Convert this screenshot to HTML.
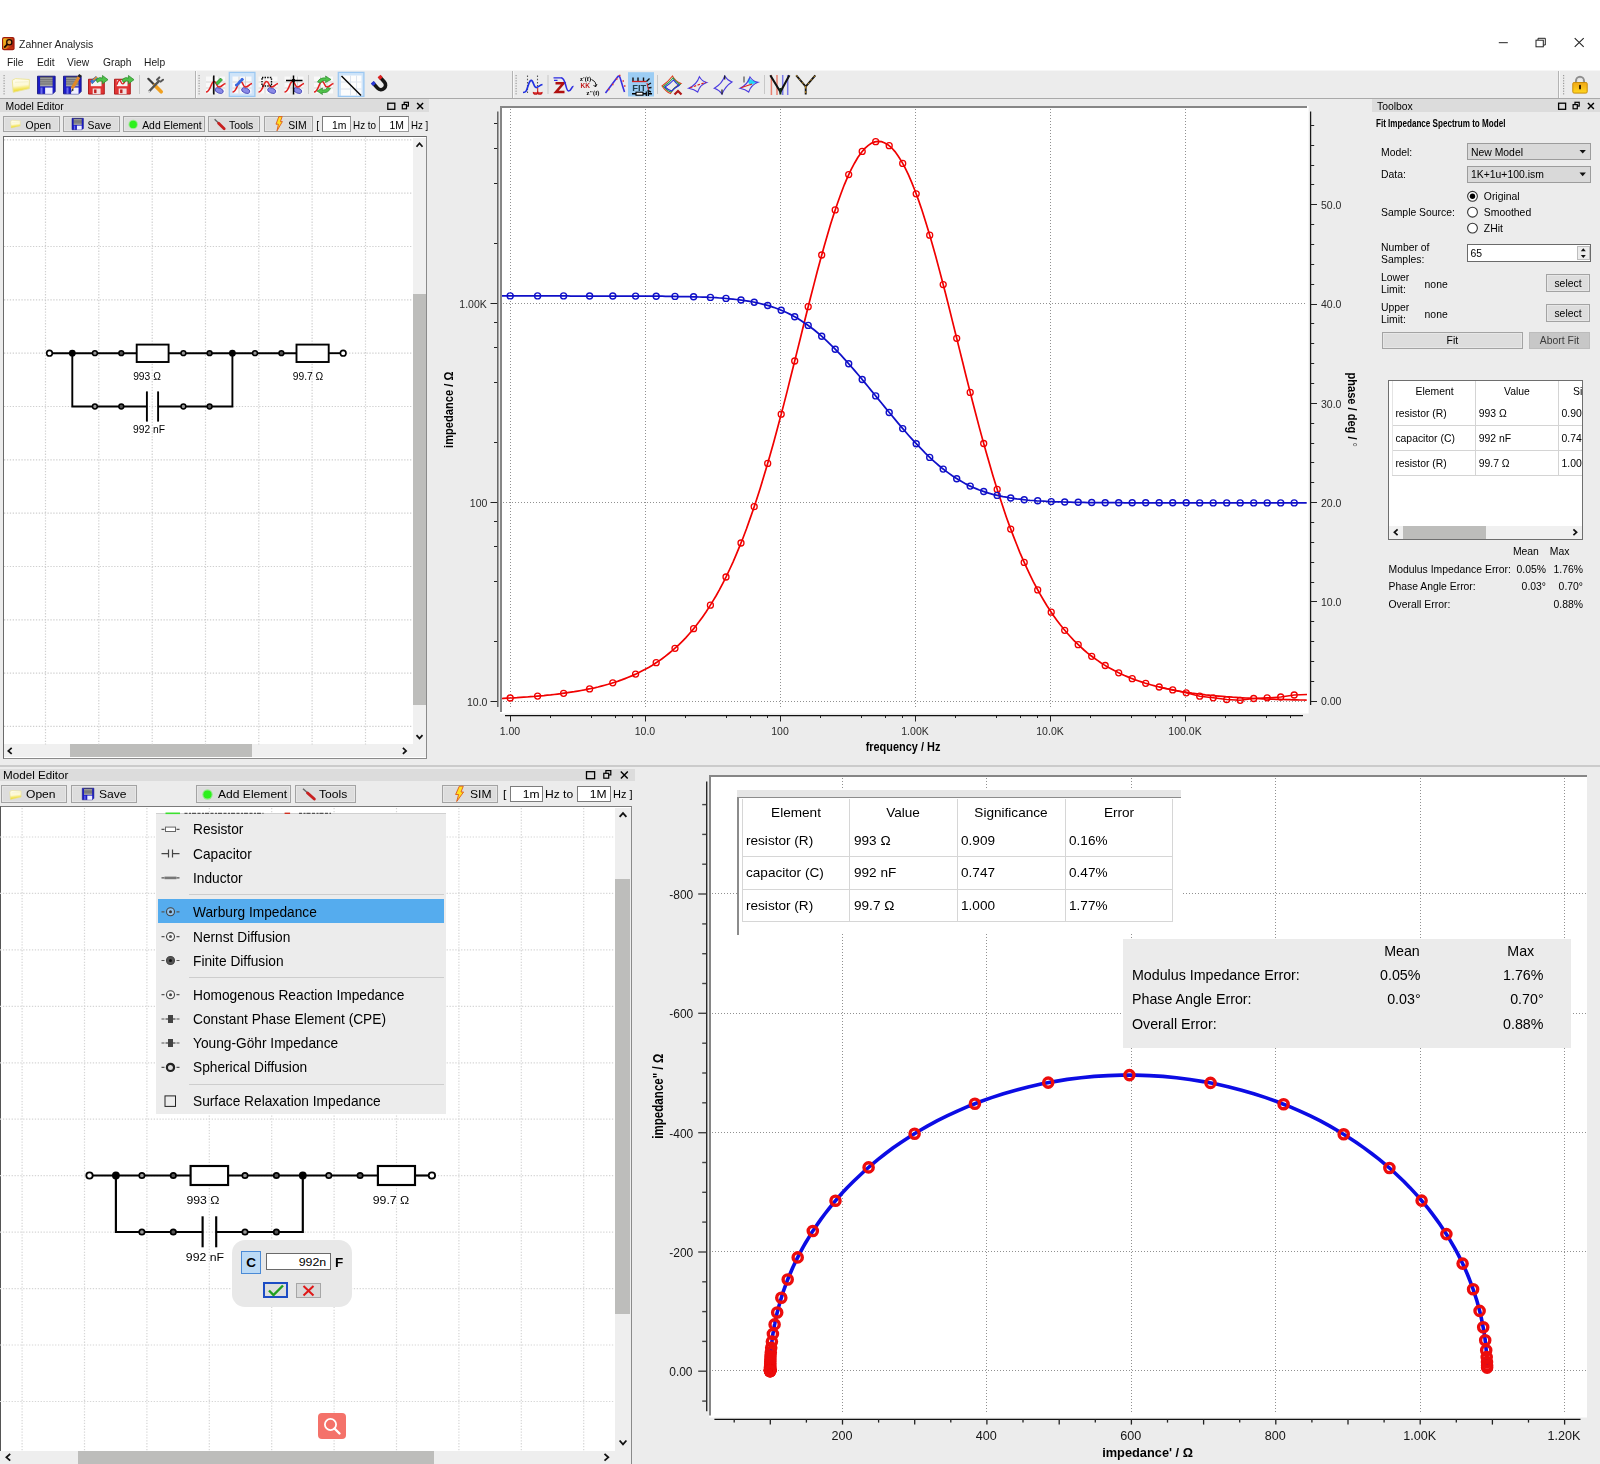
<!DOCTYPE html><html><head><meta charset="utf-8"><title>Zahner Analysis</title>
<style>html,body{margin:0;padding:0}body{width:1600px;height:1464px;position:relative;overflow:hidden;background:#fff;font-family:'Liberation Sans',sans-serif;font-size:11px;color:#000;opacity:.999}</style></head><body>
<div style="position:absolute;left:0px;top:70px;width:1600px;height:696px;box-sizing:border-box;background:#ececec;"></div>
<div style="position:absolute;left:0px;top:98px;width:1600px;height:1px;box-sizing:border-box;background:#a9a9a9;"></div>
<div style="position:absolute;left:0px;top:70px;width:1600px;height:1px;box-sizing:border-box;background:#f6f6f6;"></div>
<div style="position:absolute;top:39.00px;font-size:11px;line-height:1;white-space:nowrap;color:#262626;left:19.00px;transform:scaleX(0.95);transform-origin:0 0;">Zahner Analysis</div>
<div style="position:absolute;top:57.00px;font-size:10.8px;line-height:1;white-space:nowrap;color:#1a1a1a;left:6.60px;transform:scaleX(0.95);transform-origin:0 0;">File</div>
<div style="position:absolute;top:57.00px;font-size:10.8px;line-height:1;white-space:nowrap;color:#1a1a1a;left:36.50px;transform:scaleX(0.95);transform-origin:0 0;">Edit</div>
<div style="position:absolute;top:57.00px;font-size:10.8px;line-height:1;white-space:nowrap;color:#1a1a1a;left:67.30px;transform:scaleX(0.95);transform-origin:0 0;">View</div>
<div style="position:absolute;top:57.00px;font-size:10.8px;line-height:1;white-space:nowrap;color:#1a1a1a;left:102.60px;transform:scaleX(0.95);transform-origin:0 0;">Graph</div>
<div style="position:absolute;top:57.00px;font-size:10.8px;line-height:1;white-space:nowrap;color:#1a1a1a;left:144.40px;transform:scaleX(0.95);transform-origin:0 0;">Help</div>
<div style="position:absolute;left:0px;top:99px;width:428.5px;height:13px;box-sizing:border-box;background:#dcdcdc;"></div>
<div style="position:absolute;top:102.00px;font-size:10.4px;line-height:1;white-space:nowrap;color:#000;left:5.50px;">Model Editor</div>
<div style="position:absolute;left:1372px;top:99px;width:228px;height:13px;box-sizing:border-box;background:#dcdcdc;"></div>
<div style="position:absolute;top:102.00px;font-size:10.4px;line-height:1;white-space:nowrap;color:#000;left:1377.00px;">Toolbox</div>
<div style="position:absolute;left:194.5px;top:71px;width:1px;height:27px;box-sizing:border-box;background:#b4b4b4;"></div>
<div style="position:absolute;left:195.5px;top:71px;width:1px;height:27px;box-sizing:border-box;background:#f8f8f8;"></div>
<div style="position:absolute;left:511.5px;top:71px;width:1px;height:27px;box-sizing:border-box;background:#b4b4b4;"></div>
<div style="position:absolute;left:512.5px;top:71px;width:1px;height:27px;box-sizing:border-box;background:#f8f8f8;"></div>
<div style="position:absolute;left:1557.8px;top:71px;width:1px;height:27px;box-sizing:border-box;background:#b4b4b4;"></div>
<div style="position:absolute;left:1558.8px;top:71px;width:1px;height:27px;box-sizing:border-box;background:#f8f8f8;"></div>
<div style="position:absolute;left:0px;top:765px;width:1600px;height:2px;box-sizing:border-box;background:#cbcbcb;"></div>
<div style="position:absolute;left:0px;top:767px;width:1600px;height:697px;box-sizing:border-box;background:#ececec;"></div>
<div style="position:absolute;left:0px;top:768.5px;width:634.8px;height:12.2px;box-sizing:border-box;background:#dcdcdc;"></div>
<div style="position:absolute;top:770.00px;font-size:11px;line-height:1;white-space:nowrap;color:#000;left:3.30px;transform:scaleX(1.06);transform-origin:0 0;">Model Editor</div>
<div style="position:absolute;left:3px;top:116.2px;width:56.7px;height:15.700000000000003px;box-sizing:border-box;background:#dddddd;border:1px solid #a3a3a3;box-shadow:inset 0 0 0 1px #e6e6e6;"></div>
<div style="position:absolute;left:63.2px;top:116.2px;width:56.39999999999999px;height:15.700000000000003px;box-sizing:border-box;background:#dddddd;border:1px solid #a3a3a3;box-shadow:inset 0 0 0 1px #e6e6e6;"></div>
<div style="position:absolute;left:123px;top:116.2px;width:82px;height:15.700000000000003px;box-sizing:border-box;background:#dddddd;border:1px solid #a3a3a3;box-shadow:inset 0 0 0 1px #e6e6e6;"></div>
<div style="position:absolute;left:208.2px;top:116.2px;width:52.30000000000001px;height:15.700000000000003px;box-sizing:border-box;background:#dddddd;border:1px solid #a3a3a3;box-shadow:inset 0 0 0 1px #e6e6e6;"></div>
<div style="position:absolute;left:264px;top:116.2px;width:48.69999999999999px;height:15.700000000000003px;box-sizing:border-box;background:#dddddd;border:1px solid #a3a3a3;box-shadow:inset 0 0 0 1px #e6e6e6;"></div>
<div style="position:absolute;top:121.00px;font-size:10.4px;line-height:1;white-space:nowrap;color:#000;left:25.60px;">Open</div>
<div style="position:absolute;top:121.00px;font-size:10.4px;line-height:1;white-space:nowrap;color:#000;left:87.50px;">Save</div>
<div style="position:absolute;top:121.00px;font-size:10.4px;line-height:1;white-space:nowrap;color:#000;left:142.20px;">Add Element</div>
<div style="position:absolute;top:121.00px;font-size:10.4px;line-height:1;white-space:nowrap;color:#000;left:229.00px;">Tools</div>
<div style="position:absolute;top:121.00px;font-size:10.4px;line-height:1;white-space:nowrap;color:#000;left:288.20px;">SIM</div>
<div style="position:absolute;top:121.00px;font-size:10.4px;line-height:1;white-space:nowrap;color:#000;left:316.30px;">[</div>
<div style="position:absolute;left:321.8px;top:116.4px;width:29.2px;height:15.2px;box-sizing:border-box;background:#fff;border:1px solid #9a9a9a;border-top:1.5px solid #7c7c7c;border-left:1.5px solid #7c7c7c;"></div>
<div style="position:absolute;top:121.00px;font-size:10.4px;line-height:1;white-space:nowrap;color:#000;right:1253.60px;">1m</div>
<div style="position:absolute;top:121.00px;font-size:10.4px;line-height:1;white-space:nowrap;color:#000;left:352.90px;transform:scaleX(0.95);transform-origin:0 0;">Hz to</div>
<div style="position:absolute;left:379px;top:116.4px;width:29.8px;height:15.2px;box-sizing:border-box;background:#fff;border:1px solid #9a9a9a;border-top:1.5px solid #7c7c7c;border-left:1.5px solid #7c7c7c;"></div>
<div style="position:absolute;top:121.00px;font-size:10.4px;line-height:1;white-space:nowrap;color:#000;right:1196.00px;">1M</div>
<div style="position:absolute;top:121.00px;font-size:10.4px;line-height:1;white-space:nowrap;color:#000;left:410.80px;transform:scaleX(0.93);transform-origin:0 0;">Hz ]</div>
<div style="position:absolute;left:2.5px;top:136px;width:424.5px;height:622.5px;box-sizing:border-box;background:#fff;border:1px solid #8a8a8a;border-top:1.5px solid #6a6a6a;border-left:1.5px solid #6a6a6a;"></div>
<div style="position:absolute;left:412.5px;top:137.5px;width:13.4px;height:606px;box-sizing:border-box;background:#f0f0f0;"></div>
<div style="position:absolute;left:412.5px;top:294px;width:13.4px;height:410.5px;box-sizing:border-box;background:#bdbdbb;"></div>
<div style="position:absolute;left:4px;top:744.4px;width:408.5px;height:13px;box-sizing:border-box;background:#f0f0f0;"></div>
<div style="position:absolute;left:70.1px;top:744.4px;width:181.5px;height:13px;box-sizing:border-box;background:#bdbdbb;"></div>
<div style="position:absolute;left:412.5px;top:744.4px;width:13.4px;height:13px;box-sizing:border-box;background:#f0f0f0;"></div>
<div style="position:absolute;left:1.2px;top:785.4px;width:65.6px;height:17.200000000000045px;box-sizing:border-box;background:#dddddd;border:1px solid #a3a3a3;box-shadow:inset 0 0 0 1px #e6e6e6;"></div>
<div style="position:absolute;left:71.4px;top:785.4px;width:65.6px;height:17.200000000000045px;box-sizing:border-box;background:#dddddd;border:1px solid #a3a3a3;box-shadow:inset 0 0 0 1px #e6e6e6;"></div>
<div style="position:absolute;left:196px;top:785.4px;width:94.80000000000001px;height:17.200000000000045px;box-sizing:border-box;background:#dddddd;border:1px solid #a3a3a3;box-shadow:inset 0 0 0 1px #e6e6e6;"></div>
<div style="position:absolute;left:295.4px;top:785.4px;width:60.60000000000002px;height:17.200000000000045px;box-sizing:border-box;background:#dddddd;border:1px solid #a3a3a3;box-shadow:inset 0 0 0 1px #e6e6e6;"></div>
<div style="position:absolute;left:442.2px;top:785.4px;width:55.80000000000001px;height:17.200000000000045px;box-sizing:border-box;background:#dddddd;border:1px solid #a3a3a3;box-shadow:inset 0 0 0 1px #e6e6e6;"></div>
<div style="position:absolute;top:789.00px;font-size:11.2px;line-height:1;white-space:nowrap;color:#000;left:26.40px;transform:scaleX(1.08);transform-origin:0 0;">Open</div>
<div style="position:absolute;top:789.00px;font-size:11.2px;line-height:1;white-space:nowrap;color:#000;left:99.40px;transform:scaleX(1.08);transform-origin:0 0;">Save</div>
<div style="position:absolute;top:789.00px;font-size:11.2px;line-height:1;white-space:nowrap;color:#000;left:217.80px;transform:scaleX(1.08);transform-origin:0 0;">Add Element</div>
<div style="position:absolute;top:789.00px;font-size:11.2px;line-height:1;white-space:nowrap;color:#000;left:319.30px;transform:scaleX(1.08);transform-origin:0 0;">Tools</div>
<div style="position:absolute;top:789.00px;font-size:11.2px;line-height:1;white-space:nowrap;color:#000;left:470.30px;transform:scaleX(1.08);transform-origin:0 0;">SIM</div>
<div style="position:absolute;top:789.00px;font-size:11.2px;line-height:1;white-space:nowrap;color:#000;left:502.50px;transform:scaleX(1.08);transform-origin:0 0;">[</div>
<div style="position:absolute;left:510px;top:786.2px;width:32.5px;height:15.8px;box-sizing:border-box;background:#fff;border:1px solid #7c7c7c;"></div>
<div style="position:absolute;top:789.00px;font-size:11.2px;line-height:1;white-space:nowrap;color:#000;right:1060.50px;transform:scaleX(1.08);transform-origin:100% 0;">1m</div>
<div style="position:absolute;top:789.00px;font-size:11.2px;line-height:1;white-space:nowrap;color:#000;left:545.40px;transform:scaleX(1.08);transform-origin:0 0;">Hz to</div>
<div style="position:absolute;left:576.5px;top:786.2px;width:34px;height:15.8px;box-sizing:border-box;background:#fff;border:1px solid #7c7c7c;"></div>
<div style="position:absolute;top:789.00px;font-size:11.2px;line-height:1;white-space:nowrap;color:#000;right:993.30px;transform:scaleX(1.08);transform-origin:100% 0;">1M</div>
<div style="position:absolute;top:789.00px;font-size:11.2px;line-height:1;white-space:nowrap;color:#000;left:612.80px;transform:scaleX(0.98);transform-origin:0 0;">Hz ]</div>
<div style="position:absolute;left:0px;top:806.3px;width:632px;height:644.4px;box-sizing:border-box;background:#fff;border-top:1.5px solid #7a7a7a;border-right:1px solid #8a8a8a;border-left:1.5px solid #555;"></div>
<div style="position:absolute;left:614.7px;top:808px;width:16.5px;height:642.7px;box-sizing:border-box;background:#eeeeee;"></div>
<div style="position:absolute;left:615.2px;top:878.8px;width:14.9px;height:435px;box-sizing:border-box;background:#bdbdbb;"></div>
<div style="position:absolute;left:0px;top:1450.7px;width:631.2px;height:13.3px;box-sizing:border-box;background:#eeeeee;"></div>
<div style="position:absolute;left:631.2px;top:1449px;width:1px;height:15px;box-sizing:border-box;background:#8a8a8a;"></div>
<div style="position:absolute;left:78.4px;top:1450.7px;width:355.6px;height:13.3px;box-sizing:border-box;background:#bdbdbb;"></div>
<svg width="1600" height="1464" viewBox="0 0 1600 1464" style="position:absolute;left:0;top:0;overflow:visible">
<g stroke="#cfcfcf" stroke-width="1.2" stroke-dasharray="1.3 1.6" fill="none"><line x1="45.5" y1="137.5" x2="45.5" y2="744.4"/><line x1="98.8" y1="137.5" x2="98.8" y2="744.4"/><line x1="152.2" y1="137.5" x2="152.2" y2="744.4"/><line x1="205.5" y1="137.5" x2="205.5" y2="744.4"/><line x1="258.8" y1="137.5" x2="258.8" y2="744.4"/><line x1="312.1" y1="137.5" x2="312.1" y2="744.4"/><line x1="365.5" y1="137.5" x2="365.5" y2="744.4"/><line x1="4" y1="139.8" x2="412.5" y2="139.8"/><line x1="4" y1="193.1" x2="412.5" y2="193.1"/><line x1="4" y1="246.5" x2="412.5" y2="246.5"/><line x1="4" y1="299.8" x2="412.5" y2="299.8"/><line x1="4" y1="353.1" x2="412.5" y2="353.1"/><line x1="4" y1="406.5" x2="412.5" y2="406.5"/><line x1="4" y1="459.8" x2="412.5" y2="459.8"/><line x1="4" y1="513.1" x2="412.5" y2="513.1"/><line x1="4" y1="566.5" x2="412.5" y2="566.5"/><line x1="4" y1="619.8" x2="412.5" y2="619.8"/><line x1="4" y1="673.1" x2="412.5" y2="673.1"/><line x1="4" y1="726.4" x2="412.5" y2="726.4"/></g><g stroke="#000" stroke-width="1.9" fill="none"><line x1="49.5" y1="353.2" x2="136.7" y2="353.2"/><line x1="168.6" y1="353.2" x2="296.5" y2="353.2"/><line x1="328.7" y1="353.2" x2="343.2" y2="353.2"/><rect x="136.7" y="344.6" width="31.900000000000006" height="17.399999999999977" fill="#fff"/><rect x="296.5" y="344.6" width="32.19999999999999" height="17.399999999999977" fill="#fff"/><path d="M72.3 353.2 V406.5 H146.9 M158.1 406.5 H232.4 V353.2"/><line x1="146.9" y1="391.4" x2="146.9" y2="421.6"/><line x1="158.1" y1="391.4" x2="158.1" y2="421.6"/></g><circle cx="72.3" cy="353.2" r="3.4" fill="#000"/><circle cx="232.4" cy="353.2" r="3.4" fill="#000"/><circle cx="49.5" cy="353.2" r="2.8" fill="#fff" stroke="#000" stroke-width="1.61"/><circle cx="343.2" cy="353.2" r="2.8" fill="#fff" stroke="#000" stroke-width="1.61"/><circle cx="94.9" cy="353.2" r="2.4" fill="#999" stroke="#000" stroke-width="1.52"/><circle cx="121.3" cy="353.2" r="2.4" fill="#555" stroke="#000" stroke-width="1.52"/><circle cx="183.4" cy="353.2" r="2.4" fill="#999" stroke="#000" stroke-width="1.52"/><circle cx="209.6" cy="353.2" r="2.4" fill="#555" stroke="#000" stroke-width="1.52"/><circle cx="255" cy="353.2" r="2.4" fill="#999" stroke="#000" stroke-width="1.52"/><circle cx="281.4" cy="353.2" r="2.4" fill="#555" stroke="#000" stroke-width="1.52"/><circle cx="94.9" cy="406.5" r="2.4" fill="#999" stroke="#000" stroke-width="1.52"/><circle cx="121.3" cy="406.5" r="2.4" fill="#555" stroke="#000" stroke-width="1.52"/><circle cx="183.4" cy="406.5" r="2.4" fill="#999" stroke="#000" stroke-width="1.52"/><circle cx="209.6" cy="406.5" r="2.4" fill="#555" stroke="#000" stroke-width="1.52"/><g stroke="#d6d6d6" stroke-width="1.2" stroke-dasharray="1.3 1.6" fill="none"><line x1="22.1" y1="808" x2="22.1" y2="1450.7"/><line x1="84.5" y1="808" x2="84.5" y2="1450.7"/><line x1="146.9" y1="808" x2="146.9" y2="1450.7"/><line x1="209.3" y1="808" x2="209.3" y2="1450.7"/><line x1="271.7" y1="808" x2="271.7" y2="1450.7"/><line x1="334.1" y1="808" x2="334.1" y2="1450.7"/><line x1="396.5" y1="808" x2="396.5" y2="1450.7"/><line x1="458.9" y1="808" x2="458.9" y2="1450.7"/><line x1="521.3" y1="808" x2="521.3" y2="1450.7"/><line x1="583.7" y1="808" x2="583.7" y2="1450.7"/><line x1="0" y1="837.0" x2="614.7" y2="837.0"/><line x1="0" y1="893.4" x2="614.7" y2="893.4"/><line x1="0" y1="949.9" x2="614.7" y2="949.9"/><line x1="0" y1="1006.3" x2="614.7" y2="1006.3"/><line x1="0" y1="1062.8" x2="614.7" y2="1062.8"/><line x1="0" y1="1119.2" x2="614.7" y2="1119.2"/><line x1="0" y1="1175.7" x2="614.7" y2="1175.7"/><line x1="0" y1="1232.1" x2="614.7" y2="1232.1"/><line x1="0" y1="1288.6" x2="614.7" y2="1288.6"/><line x1="0" y1="1345.0" x2="614.7" y2="1345.0"/><line x1="0" y1="1401.5" x2="614.7" y2="1401.5"/></g><g stroke="#000" stroke-width="2.15" fill="none"><line x1="89.5" y1="1175.5" x2="190.6" y2="1175.5"/><line x1="228.1" y1="1175.5" x2="377.9" y2="1175.5"/><line x1="415" y1="1175.5" x2="431.9" y2="1175.5"/><rect x="190.6" y="1166" width="37.5" height="19" fill="#fff"/><rect x="377.9" y="1166" width="37.10000000000002" height="19" fill="#fff"/><path d="M115.9 1175.5 V1232 H202.6 M216.2 1232 H302.8 V1175.5"/><line x1="202.6" y1="1216.3" x2="202.6" y2="1247.3"/><line x1="216.2" y1="1216.3" x2="216.2" y2="1247.3"/></g><circle cx="115.9" cy="1175.5" r="3.9" fill="#000"/><circle cx="302.8" cy="1175.5" r="3.9" fill="#000"/><circle cx="89.5" cy="1175.5" r="3.2" fill="#fff" stroke="#000" stroke-width="1.83"/><circle cx="431.9" cy="1175.5" r="3.2" fill="#fff" stroke="#000" stroke-width="1.83"/><circle cx="141.9" cy="1175.5" r="2.7" fill="#999" stroke="#000" stroke-width="1.72"/><circle cx="173.3" cy="1175.5" r="2.7" fill="#555" stroke="#000" stroke-width="1.72"/><circle cx="245" cy="1175.5" r="2.7" fill="#999" stroke="#000" stroke-width="1.72"/><circle cx="276.4" cy="1175.5" r="2.7" fill="#555" stroke="#000" stroke-width="1.72"/><circle cx="328.8" cy="1175.5" r="2.7" fill="#999" stroke="#000" stroke-width="1.72"/><circle cx="360.1" cy="1175.5" r="2.7" fill="#555" stroke="#000" stroke-width="1.72"/><circle cx="141.9" cy="1232" r="2.7" fill="#999" stroke="#000" stroke-width="1.72"/><circle cx="173.3" cy="1232" r="2.7" fill="#555" stroke="#000" stroke-width="1.72"/><circle cx="245" cy="1232" r="2.7" fill="#999" stroke="#000" stroke-width="1.72"/><circle cx="276.4" cy="1232" r="2.7" fill="#555" stroke="#000" stroke-width="1.72"/>
<rect x="500" y="106" width="808.5999999999999" height="607.5" fill="#fff"/><path d="M501 712 V107 H1307.0" stroke="#868686" stroke-width="2" fill="none"/><g stroke="#909090" stroke-width="1" stroke-dasharray="1 2" fill="none"><line x1="510.5" y1="109" x2="510.5" y2="709"/><line x1="645.5" y1="109" x2="645.5" y2="709"/><line x1="780.5" y1="109" x2="780.5" y2="709"/><line x1="915.5" y1="109" x2="915.5" y2="709"/><line x1="1050.5" y1="109" x2="1050.5" y2="709"/><line x1="1185.5" y1="109" x2="1185.5" y2="709"/><line x1="503" y1="303.5" x2="1305.6" y2="303.5"/><line x1="503" y1="502.5" x2="1305.6" y2="502.5"/><line x1="503" y1="701.5" x2="1305.6" y2="701.5"/></g><g stroke="#222" fill="none"><line x1="497.8" y1="111.5" x2="497.8" y2="707" stroke-width="1.4" stroke="#5a5a5a"/><line x1="505" y1="715.6" x2="1303" y2="715.6" stroke-width="1.15" stroke="#111"/><line x1="1310.6" y1="111.5" x2="1310.6" y2="705" stroke-width="1.25" stroke="#1a1a1a"/><line x1="490.5" y1="701.5" x2="497.2" y2="701.5" stroke-width="1"/><line x1="494" y1="641.5" x2="497.2" y2="641.5" stroke-width="1"/><line x1="494" y1="581.5" x2="497.2" y2="581.5" stroke-width="1"/><line x1="494" y1="546.5" x2="497.2" y2="546.5" stroke-width="1"/><line x1="494" y1="521.5" x2="497.2" y2="521.5" stroke-width="1"/><line x1="490.5" y1="502.5" x2="497.2" y2="502.5" stroke-width="1"/><line x1="494" y1="442.5" x2="497.2" y2="442.5" stroke-width="1"/><line x1="494" y1="382.5" x2="497.2" y2="382.5" stroke-width="1"/><line x1="494" y1="347.5" x2="497.2" y2="347.5" stroke-width="1"/><line x1="494" y1="322.5" x2="497.2" y2="322.5" stroke-width="1"/><line x1="490.5" y1="303.5" x2="497.2" y2="303.5" stroke-width="1"/><line x1="494" y1="243.5" x2="497.2" y2="243.5" stroke-width="1"/><line x1="494" y1="183.5" x2="497.2" y2="183.5" stroke-width="1"/><line x1="494" y1="148.5" x2="497.2" y2="148.5" stroke-width="1"/><line x1="494" y1="123.5" x2="497.2" y2="123.5" stroke-width="1"/><line x1="510.5" y1="715.6" x2="510.5" y2="721.5" stroke-width="1"/><line x1="550.5" y1="715.6" x2="550.5" y2="718" stroke-width="1"/><line x1="591.5" y1="715.6" x2="591.5" y2="718" stroke-width="1"/><line x1="615.5" y1="715.6" x2="615.5" y2="718" stroke-width="1"/><line x1="632.5" y1="715.6" x2="632.5" y2="718" stroke-width="1"/><line x1="645.5" y1="715.6" x2="645.5" y2="721.5" stroke-width="1"/><line x1="685.5" y1="715.6" x2="685.5" y2="718" stroke-width="1"/><line x1="726.5" y1="715.6" x2="726.5" y2="718" stroke-width="1"/><line x1="750.5" y1="715.6" x2="750.5" y2="718" stroke-width="1"/><line x1="767.5" y1="715.6" x2="767.5" y2="718" stroke-width="1"/><line x1="780.5" y1="715.6" x2="780.5" y2="721.5" stroke-width="1"/><line x1="820.5" y1="715.6" x2="820.5" y2="718" stroke-width="1"/><line x1="861.5" y1="715.6" x2="861.5" y2="718" stroke-width="1"/><line x1="885.5" y1="715.6" x2="885.5" y2="718" stroke-width="1"/><line x1="902.5" y1="715.6" x2="902.5" y2="718" stroke-width="1"/><line x1="915.5" y1="715.6" x2="915.5" y2="721.5" stroke-width="1"/><line x1="955.5" y1="715.6" x2="955.5" y2="718" stroke-width="1"/><line x1="996.5" y1="715.6" x2="996.5" y2="718" stroke-width="1"/><line x1="1020.5" y1="715.6" x2="1020.5" y2="718" stroke-width="1"/><line x1="1037.5" y1="715.6" x2="1037.5" y2="718" stroke-width="1"/><line x1="1050.5" y1="715.6" x2="1050.5" y2="721.5" stroke-width="1"/><line x1="1090.5" y1="715.6" x2="1090.5" y2="718" stroke-width="1"/><line x1="1131.5" y1="715.6" x2="1131.5" y2="718" stroke-width="1"/><line x1="1155.5" y1="715.6" x2="1155.5" y2="718" stroke-width="1"/><line x1="1172.5" y1="715.6" x2="1172.5" y2="718" stroke-width="1"/><line x1="1185.5" y1="715.6" x2="1185.5" y2="721.5" stroke-width="1"/><line x1="1225.5" y1="715.6" x2="1225.5" y2="718" stroke-width="1"/><line x1="1266.5" y1="715.6" x2="1266.5" y2="718" stroke-width="1"/><line x1="1290.5" y1="715.6" x2="1290.5" y2="718" stroke-width="1"/><line x1="1310.6" y1="701.5" x2="1317" y2="701.5" stroke-width="1"/><line x1="1310.6" y1="681.5" x2="1314.2" y2="681.5" stroke-width="1"/><line x1="1310.6" y1="661.5" x2="1314.2" y2="661.5" stroke-width="1"/><line x1="1310.6" y1="641.5" x2="1314.2" y2="641.5" stroke-width="1"/><line x1="1310.6" y1="621.5" x2="1314.2" y2="621.5" stroke-width="1"/><line x1="1310.6" y1="601.5" x2="1317" y2="601.5" stroke-width="1"/><line x1="1310.6" y1="582.5" x2="1314.2" y2="582.5" stroke-width="1"/><line x1="1310.6" y1="562.5" x2="1314.2" y2="562.5" stroke-width="1"/><line x1="1310.6" y1="542.5" x2="1314.2" y2="542.5" stroke-width="1"/><line x1="1310.6" y1="522.5" x2="1314.2" y2="522.5" stroke-width="1"/><line x1="1310.6" y1="502.5" x2="1317" y2="502.5" stroke-width="1"/><line x1="1310.6" y1="482.5" x2="1314.2" y2="482.5" stroke-width="1"/><line x1="1310.6" y1="462.5" x2="1314.2" y2="462.5" stroke-width="1"/><line x1="1310.6" y1="443.5" x2="1314.2" y2="443.5" stroke-width="1"/><line x1="1310.6" y1="423.5" x2="1314.2" y2="423.5" stroke-width="1"/><line x1="1310.6" y1="403.5" x2="1317" y2="403.5" stroke-width="1"/><line x1="1310.6" y1="383.5" x2="1314.2" y2="383.5" stroke-width="1"/><line x1="1310.6" y1="363.5" x2="1314.2" y2="363.5" stroke-width="1"/><line x1="1310.6" y1="343.5" x2="1314.2" y2="343.5" stroke-width="1"/><line x1="1310.6" y1="323.5" x2="1314.2" y2="323.5" stroke-width="1"/><line x1="1310.6" y1="304.5" x2="1317" y2="304.5" stroke-width="1"/><line x1="1310.6" y1="284.5" x2="1314.2" y2="284.5" stroke-width="1"/><line x1="1310.6" y1="264.5" x2="1314.2" y2="264.5" stroke-width="1"/><line x1="1310.6" y1="244.5" x2="1314.2" y2="244.5" stroke-width="1"/><line x1="1310.6" y1="224.5" x2="1314.2" y2="224.5" stroke-width="1"/><line x1="1310.6" y1="204.5" x2="1317" y2="204.5" stroke-width="1"/><line x1="1310.6" y1="184.5" x2="1314.2" y2="184.5" stroke-width="1"/><line x1="1310.6" y1="165.5" x2="1314.2" y2="165.5" stroke-width="1"/><line x1="1310.6" y1="145.5" x2="1314.2" y2="145.5" stroke-width="1"/><line x1="1310.6" y1="125.5" x2="1314.2" y2="125.5" stroke-width="1"/></g><clipPath id="cb"><rect x="502" y="108" width="805.5999999999999" height="605.5"/></clipPath><g clip-path="url(#cb)" fill="none"><polyline points="496.7,698.7 500.1,698.6 503.4,698.4 506.8,698.2 510.2,698.0 513.6,697.9 516.9,697.7 520.3,697.4 523.7,697.2 527.1,697.0 530.5,696.7 533.8,696.5 537.2,696.2 540.6,695.9 543.9,695.6 547.3,695.2 550.7,694.9 554.1,694.5 557.5,694.1 560.8,693.7 564.2,693.2 567.6,692.7 570.9,692.2 574.3,691.7 577.7,691.1 581.1,690.5 584.5,689.9 587.8,689.2 591.2,688.5 594.6,687.8 598.0,687.0 601.3,686.1 604.7,685.2 608.1,684.3 611.5,683.3 614.8,682.2 618.2,681.1 621.6,679.9 625.0,678.6 628.3,677.3 631.7,675.9 635.1,674.4 638.5,672.8 641.8,671.1 645.2,669.3 648.6,667.4 652.0,665.4 655.3,663.3 658.7,661.1 662.1,658.7 665.5,656.2 668.8,653.5 672.2,650.7 675.6,647.7 679.0,644.6 682.3,641.3 685.7,637.8 689.1,634.0 692.5,630.1 695.8,626.0 699.2,621.6 702.6,616.9 706.0,612.0 709.3,606.9 712.7,601.4 716.1,595.7 719.5,589.7 722.8,583.3 726.2,576.6 729.6,569.5 733.0,562.1 736.3,554.4 739.7,546.2 743.1,537.7 746.5,528.8 749.8,519.4 753.2,509.7 756.6,499.6 760.0,489.0 763.3,478.1 766.7,466.8 770.1,455.1 773.5,443.1 776.8,430.7 780.2,418.0 783.6,405.1 787.0,391.9 790.3,378.5 793.7,365.0 797.1,351.4 800.5,337.8 803.8,324.2 807.2,310.7 810.6,297.3 814.0,284.1 817.3,271.2 820.7,258.7 824.1,246.5 827.5,234.8 830.8,223.6 834.2,212.9 837.6,202.9 841.0,193.5 844.3,184.8 847.7,176.8 851.1,169.6 854.5,163.2 857.8,157.5 861.2,152.7 864.6,148.7 868.0,145.6 871.3,143.3 874.7,141.9 878.1,141.4 881.5,141.7 884.8,142.9 888.2,144.9 891.6,147.8 895.0,151.6 898.3,156.2 901.7,161.6 905.1,167.9 908.5,174.9 911.8,182.7 915.2,191.2 918.6,200.4 922.0,210.2 925.3,220.7 928.7,231.8 932.1,243.4 935.5,255.4 938.8,267.9 942.2,280.7 945.6,293.8 949.0,307.2 952.3,320.6 955.7,334.2 959.1,347.9 962.5,361.5 965.8,375.0 969.2,388.4 972.6,401.7 976.0,414.7 979.3,427.4 982.7,439.9 986.1,452.0 989.5,463.8 992.8,475.2 996.2,486.2 999.6,496.8 1003.0,507.1 1006.3,516.9 1009.7,526.4 1013.1,535.4 1016.5,544.0 1019.8,552.3 1023.2,560.1 1026.6,567.6 1030.0,574.8 1033.3,581.6 1036.7,588.0 1040.1,594.2 1043.5,600.0 1046.8,605.5 1050.2,610.7 1053.6,615.7 1057.0,620.4 1060.3,624.8 1063.7,629.0 1067.1,633.0 1070.5,636.8 1073.8,640.4 1077.2,643.7 1080.6,646.9 1084.0,650.0 1087.3,652.8 1090.7,655.5 1094.1,658.0 1097.5,660.4 1100.8,662.7 1104.2,664.9 1107.6,666.9 1111.0,668.8 1114.3,670.6 1117.7,672.3 1121.1,673.9 1124.5,675.5 1127.8,676.9 1131.2,678.3 1134.6,679.6 1138.0,680.8 1141.3,681.9 1144.7,683.0 1148.1,684.0 1151.5,685.0 1154.8,685.9 1158.2,686.7 1161.6,687.6 1165.0,688.3 1168.3,689.0 1171.7,689.7 1175.1,690.4 1178.5,691.0 1181.8,691.6 1185.2,692.1 1188.6,692.6 1192.0,693.1 1195.3,693.5 1198.7,694.0 1202.1,694.4 1205.5,694.8 1208.8,695.1 1212.2,695.5 1215.6,695.8 1219.0,696.1 1222.3,696.4 1225.7,696.7 1229.1,696.9 1232.5,697.2 1235.8,697.4 1239.2,697.6 1242.6,697.8 1246.0,698.0 1249.3,698.2 1252.7,698.4 1256.1,698.5 1259.5,698.7 1262.8,698.8 1266.2,699.0 1269.6,699.1 1273.0,699.2 1276.3,699.3 1279.7,699.4 1283.1,699.5 1286.5,699.6 1289.8,699.7 1293.2,699.8 1296.6,699.9 1300.0,700.0 1303.3,700.0 1306.7,700.1" stroke="#f00000" stroke-width="1.7"/><polyline points="1159.2,687.0 1172.7,689.9 1186.2,692.8 1199.7,696.2 1213.2,697.8 1226.7,699.6 1240.2,700.3 1253.7,698.5 1267.2,697.8 1280.7,697.0 1294.2,695.0 1307,694.4" stroke="#f00000" stroke-width="1.5"/><polyline points="496.7,295.9 500.1,295.9 503.4,295.9 506.8,295.9 510.2,295.9 513.6,295.9 516.9,295.9 520.3,295.9 523.7,295.9 527.1,295.9 530.5,295.9 533.8,295.9 537.2,295.9 540.6,295.9 543.9,295.9 547.3,295.9 550.7,295.9 554.1,295.9 557.5,295.9 560.8,295.9 564.2,295.9 567.6,295.9 570.9,296.0 574.3,296.0 577.7,296.0 581.1,296.0 584.5,296.0 587.8,296.0 591.2,296.0 594.6,296.0 598.0,296.0 601.3,296.0 604.7,296.0 608.1,296.0 611.5,296.0 614.8,296.0 618.2,296.0 621.6,296.0 625.0,296.0 628.3,296.0 631.7,296.0 635.1,296.1 638.5,296.1 641.8,296.1 645.2,296.1 648.6,296.1 652.0,296.1 655.3,296.2 658.7,296.2 662.1,296.2 665.5,296.3 668.8,296.3 672.2,296.3 675.6,296.4 679.0,296.5 682.3,296.5 685.7,296.6 689.1,296.7 692.5,296.8 695.8,296.9 699.2,297.0 702.6,297.1 706.0,297.2 709.3,297.4 712.7,297.5 716.1,297.7 719.5,298.0 722.8,298.2 726.2,298.5 729.6,298.8 733.0,299.1 736.3,299.5 739.7,299.9 743.1,300.3 746.5,300.8 749.8,301.4 753.2,302.0 756.6,302.7 760.0,303.5 763.3,304.3 766.7,305.2 770.1,306.2 773.5,307.3 776.8,308.5 780.2,309.8 783.6,311.2 787.0,312.8 790.3,314.4 793.7,316.2 797.1,318.1 800.5,320.2 803.8,322.4 807.2,324.7 810.6,327.2 814.0,329.8 817.3,332.5 820.7,335.4 824.1,338.4 827.5,341.6 830.8,344.8 834.2,348.2 837.6,351.6 841.0,355.2 844.3,358.9 847.7,362.6 851.1,366.5 854.5,370.4 857.8,374.3 861.2,378.3 864.6,382.4 868.0,386.5 871.3,390.6 874.7,394.7 878.1,398.9 881.5,403.0 884.8,407.1 888.2,411.3 891.6,415.3 895.0,419.4 898.3,423.4 901.7,427.4 905.1,431.3 908.5,435.2 911.8,438.9 915.2,442.6 918.6,446.2 922.0,449.7 925.3,453.1 928.7,456.4 932.1,459.6 935.5,462.6 938.8,465.5 942.2,468.3 945.6,470.9 949.0,473.4 952.3,475.8 955.7,478.0 959.1,480.1 962.5,482.1 965.8,483.9 969.2,485.6 972.6,487.2 976.0,488.6 979.3,490.0 982.7,491.2 986.1,492.3 989.5,493.3 992.8,494.3 996.2,495.1 999.6,495.9 1003.0,496.6 1006.3,497.2 1009.7,497.8 1013.1,498.3 1016.5,498.8 1019.8,499.2 1023.2,499.6 1026.6,500.0 1030.0,500.3 1033.3,500.5 1036.7,500.8 1040.1,501.0 1043.5,501.2 1046.8,501.4 1050.2,501.5 1053.6,501.7 1057.0,501.8 1060.3,501.9 1063.7,502.0 1067.1,502.1 1070.5,502.2 1073.8,502.3 1077.2,502.3 1080.6,502.4 1084.0,502.4 1087.3,502.5 1090.7,502.5 1094.1,502.6 1097.5,502.6 1100.8,502.6 1104.2,502.6 1107.6,502.7 1111.0,502.7 1114.3,502.7 1117.7,502.7 1121.1,502.7 1124.5,502.8 1127.8,502.8 1131.2,502.8 1134.6,502.8 1138.0,502.8 1141.3,502.8 1144.7,502.8 1148.1,502.8 1151.5,502.8 1154.8,502.8 1158.2,502.8 1161.6,502.8 1165.0,502.8 1168.3,502.8 1171.7,502.8 1175.1,502.8 1178.5,502.8 1181.8,502.8 1185.2,502.8 1188.6,502.8 1192.0,502.8 1195.3,502.9 1198.7,502.9 1202.1,502.9 1205.5,502.9 1208.8,502.9 1212.2,502.9 1215.6,502.9 1219.0,502.9 1222.3,502.9 1225.7,502.9 1229.1,502.9 1232.5,502.9 1235.8,502.9 1239.2,502.9 1242.6,502.9 1246.0,502.9 1249.3,502.9 1252.7,502.9 1256.1,502.9 1259.5,502.9 1262.8,502.9 1266.2,502.9 1269.6,502.9 1273.0,502.9 1276.3,502.9 1279.7,502.9 1283.1,502.9 1286.5,502.9 1289.8,502.9 1293.2,502.9 1296.6,502.9 1300.0,502.9 1303.3,502.9 1306.7,502.9" stroke="#1010c8" stroke-width="1.75"/><circle cx="510.2" cy="698.0" r="3.0" stroke="#f00000" stroke-width="1.3"/><circle cx="537.6" cy="696.1" r="3.0" stroke="#f00000" stroke-width="1.3"/><circle cx="563.6" cy="693.3" r="3.0" stroke="#f00000" stroke-width="1.3"/><circle cx="589.6" cy="688.9" r="3.0" stroke="#f00000" stroke-width="1.3"/><circle cx="612.8" cy="682.8" r="3.0" stroke="#f00000" stroke-width="1.3"/><circle cx="635.6" cy="674.1" r="3.0" stroke="#f00000" stroke-width="1.3"/><circle cx="656.2" cy="662.7" r="3.0" stroke="#f00000" stroke-width="1.3"/><circle cx="675.0" cy="648.3" r="3.0" stroke="#f00000" stroke-width="1.3"/><circle cx="693.6" cy="628.7" r="3.0" stroke="#f00000" stroke-width="1.3"/><circle cx="710.4" cy="605.2" r="3.0" stroke="#f00000" stroke-width="1.3"/><circle cx="726.0" cy="577.0" r="3.0" stroke="#f00000" stroke-width="1.3"/><circle cx="741.0" cy="543.0" r="3.0" stroke="#f00000" stroke-width="1.3"/><circle cx="754.2" cy="506.7" r="3.0" stroke="#f00000" stroke-width="1.3"/><circle cx="767.7" cy="463.4" r="3.0" stroke="#f00000" stroke-width="1.3"/><circle cx="781.2" cy="414.2" r="3.0" stroke="#f00000" stroke-width="1.3"/><circle cx="794.7" cy="361.0" r="3.0" stroke="#f00000" stroke-width="1.3"/><circle cx="808.2" cy="306.7" r="3.0" stroke="#f00000" stroke-width="1.3"/><circle cx="821.7" cy="255.0" r="3.0" stroke="#f00000" stroke-width="1.3"/><circle cx="835.2" cy="209.9" r="3.0" stroke="#f00000" stroke-width="1.3"/><circle cx="848.7" cy="174.6" r="3.0" stroke="#f00000" stroke-width="1.3"/><circle cx="862.2" cy="151.4" r="3.0" stroke="#f00000" stroke-width="1.3"/><circle cx="875.7" cy="141.7" r="3.0" stroke="#f00000" stroke-width="1.3"/><circle cx="889.2" cy="145.7" r="3.0" stroke="#f00000" stroke-width="1.3"/><circle cx="902.7" cy="163.4" r="3.0" stroke="#f00000" stroke-width="1.3"/><circle cx="916.2" cy="193.8" r="3.0" stroke="#f00000" stroke-width="1.3"/><circle cx="929.7" cy="235.2" r="3.0" stroke="#f00000" stroke-width="1.3"/><circle cx="943.2" cy="284.6" r="3.0" stroke="#f00000" stroke-width="1.3"/><circle cx="956.7" cy="338.3" r="3.0" stroke="#f00000" stroke-width="1.3"/><circle cx="970.2" cy="392.4" r="3.0" stroke="#f00000" stroke-width="1.3"/><circle cx="983.7" cy="443.5" r="3.0" stroke="#f00000" stroke-width="1.3"/><circle cx="997.2" cy="489.4" r="3.0" stroke="#f00000" stroke-width="1.3"/><circle cx="1010.7" cy="529.1" r="3.0" stroke="#f00000" stroke-width="1.3"/><circle cx="1024.2" cy="562.4" r="3.0" stroke="#f00000" stroke-width="1.3"/><circle cx="1037.7" cy="589.9" r="3.0" stroke="#f00000" stroke-width="1.3"/><circle cx="1051.2" cy="612.2" r="3.0" stroke="#f00000" stroke-width="1.3"/><circle cx="1064.7" cy="630.3" r="3.0" stroke="#f00000" stroke-width="1.3"/><circle cx="1078.2" cy="644.7" r="3.0" stroke="#f00000" stroke-width="1.3"/><circle cx="1091.7" cy="656.3" r="3.0" stroke="#f00000" stroke-width="1.3"/><circle cx="1105.2" cy="665.5" r="3.0" stroke="#f00000" stroke-width="1.3"/><circle cx="1118.7" cy="672.8" r="3.0" stroke="#f00000" stroke-width="1.3"/><circle cx="1132.2" cy="678.7" r="3.0" stroke="#f00000" stroke-width="1.3"/><circle cx="1145.7" cy="683.3" r="3.0" stroke="#f00000" stroke-width="1.3"/><circle cx="1159.2" cy="687.0" r="3.0" stroke="#f00000" stroke-width="1.3"/><circle cx="1172.7" cy="689.9" r="3.0" stroke="#f00000" stroke-width="1.3"/><circle cx="1186.2" cy="692.8" r="3.0" stroke="#f00000" stroke-width="1.3"/><circle cx="1199.7" cy="696.2" r="3.0" stroke="#f00000" stroke-width="1.3"/><circle cx="1213.2" cy="697.8" r="3.0" stroke="#f00000" stroke-width="1.3"/><circle cx="1226.7" cy="699.6" r="3.0" stroke="#f00000" stroke-width="1.3"/><circle cx="1240.2" cy="700.3" r="3.0" stroke="#f00000" stroke-width="1.3"/><circle cx="1253.7" cy="698.5" r="3.0" stroke="#f00000" stroke-width="1.3"/><circle cx="1267.2" cy="697.8" r="3.0" stroke="#f00000" stroke-width="1.3"/><circle cx="1280.7" cy="697.0" r="3.0" stroke="#f00000" stroke-width="1.3"/><circle cx="1294.2" cy="695.0" r="3.0" stroke="#f00000" stroke-width="1.3"/><circle cx="510.2" cy="295.9" r="3.0" stroke="#1010c8" stroke-width="1.4"/><circle cx="537.6" cy="295.9" r="3.0" stroke="#1010c8" stroke-width="1.4"/><circle cx="563.6" cy="295.9" r="3.0" stroke="#1010c8" stroke-width="1.4"/><circle cx="589.6" cy="296.0" r="3.0" stroke="#1010c8" stroke-width="1.4"/><circle cx="612.8" cy="296.0" r="3.0" stroke="#1010c8" stroke-width="1.4"/><circle cx="635.6" cy="296.1" r="3.0" stroke="#1010c8" stroke-width="1.4"/><circle cx="656.2" cy="296.2" r="3.0" stroke="#1010c8" stroke-width="1.4"/><circle cx="675.0" cy="296.4" r="3.0" stroke="#1010c8" stroke-width="1.4"/><circle cx="693.6" cy="296.8" r="3.0" stroke="#1010c8" stroke-width="1.4"/><circle cx="710.4" cy="297.4" r="3.0" stroke="#1010c8" stroke-width="1.4"/><circle cx="726.0" cy="298.4" r="3.0" stroke="#1010c8" stroke-width="1.4"/><circle cx="741.0" cy="300.0" r="3.0" stroke="#1010c8" stroke-width="1.4"/><circle cx="754.2" cy="302.2" r="3.0" stroke="#1010c8" stroke-width="1.4"/><circle cx="767.7" cy="305.5" r="3.0" stroke="#1010c8" stroke-width="1.4"/><circle cx="781.2" cy="310.2" r="3.0" stroke="#1010c8" stroke-width="1.4"/><circle cx="794.7" cy="316.8" r="3.0" stroke="#1010c8" stroke-width="1.4"/><circle cx="808.2" cy="325.4" r="3.0" stroke="#1010c8" stroke-width="1.4"/><circle cx="821.7" cy="336.3" r="3.0" stroke="#1010c8" stroke-width="1.4"/><circle cx="835.2" cy="349.2" r="3.0" stroke="#1010c8" stroke-width="1.4"/><circle cx="848.7" cy="363.8" r="3.0" stroke="#1010c8" stroke-width="1.4"/><circle cx="862.2" cy="379.5" r="3.0" stroke="#1010c8" stroke-width="1.4"/><circle cx="875.7" cy="395.9" r="3.0" stroke="#1010c8" stroke-width="1.4"/><circle cx="889.2" cy="412.5" r="3.0" stroke="#1010c8" stroke-width="1.4"/><circle cx="902.7" cy="428.6" r="3.0" stroke="#1010c8" stroke-width="1.4"/><circle cx="916.2" cy="443.7" r="3.0" stroke="#1010c8" stroke-width="1.4"/><circle cx="929.7" cy="457.4" r="3.0" stroke="#1010c8" stroke-width="1.4"/><circle cx="943.2" cy="469.1" r="3.0" stroke="#1010c8" stroke-width="1.4"/><circle cx="956.7" cy="478.7" r="3.0" stroke="#1010c8" stroke-width="1.4"/><circle cx="970.2" cy="486.1" r="3.0" stroke="#1010c8" stroke-width="1.4"/><circle cx="983.7" cy="491.5" r="3.0" stroke="#1010c8" stroke-width="1.4"/><circle cx="997.2" cy="495.4" r="3.0" stroke="#1010c8" stroke-width="1.4"/><circle cx="1010.7" cy="498.0" r="3.0" stroke="#1010c8" stroke-width="1.4"/><circle cx="1024.2" cy="499.7" r="3.0" stroke="#1010c8" stroke-width="1.4"/><circle cx="1037.7" cy="500.8" r="3.0" stroke="#1010c8" stroke-width="1.4"/><circle cx="1051.2" cy="501.6" r="3.0" stroke="#1010c8" stroke-width="1.4"/><circle cx="1064.7" cy="502.0" r="3.0" stroke="#1010c8" stroke-width="1.4"/><circle cx="1078.2" cy="502.3" r="3.0" stroke="#1010c8" stroke-width="1.4"/><circle cx="1091.7" cy="502.5" r="3.0" stroke="#1010c8" stroke-width="1.4"/><circle cx="1105.2" cy="502.7" r="3.0" stroke="#1010c8" stroke-width="1.4"/><circle cx="1118.7" cy="502.7" r="3.0" stroke="#1010c8" stroke-width="1.4"/><circle cx="1132.2" cy="502.8" r="3.0" stroke="#1010c8" stroke-width="1.4"/><circle cx="1145.7" cy="502.8" r="3.0" stroke="#1010c8" stroke-width="1.4"/><circle cx="1159.2" cy="502.8" r="3.0" stroke="#1010c8" stroke-width="1.4"/><circle cx="1172.7" cy="502.8" r="3.0" stroke="#1010c8" stroke-width="1.4"/><circle cx="1186.2" cy="502.8" r="3.0" stroke="#1010c8" stroke-width="1.4"/><circle cx="1199.7" cy="502.9" r="3.0" stroke="#1010c8" stroke-width="1.4"/><circle cx="1213.2" cy="502.9" r="3.0" stroke="#1010c8" stroke-width="1.4"/><circle cx="1226.7" cy="502.9" r="3.0" stroke="#1010c8" stroke-width="1.4"/><circle cx="1240.2" cy="502.9" r="3.0" stroke="#1010c8" stroke-width="1.4"/><circle cx="1253.7" cy="502.9" r="3.0" stroke="#1010c8" stroke-width="1.4"/><circle cx="1267.2" cy="502.9" r="3.0" stroke="#1010c8" stroke-width="1.4"/><circle cx="1280.7" cy="502.9" r="3.0" stroke="#1010c8" stroke-width="1.4"/><circle cx="1294.2" cy="502.9" r="3.0" stroke="#1010c8" stroke-width="1.4"/></g>
<rect x="709" y="775" width="878" height="642.5" fill="#fff"/><path d="M710 1415.6 V776 H1587" stroke="#868686" stroke-width="2" fill="none"/><g stroke="#909090" stroke-width="1" stroke-dasharray="1 2" fill="none"><line x1="842.5" y1="778" x2="842.5" y2="1414"/><line x1="986.5" y1="778" x2="986.5" y2="1414"/><line x1="1131.5" y1="778" x2="1131.5" y2="1414"/><line x1="1275.5" y1="778" x2="1275.5" y2="1414"/><line x1="1420.5" y1="778" x2="1420.5" y2="1414"/><line x1="1564.5" y1="778" x2="1564.5" y2="1414"/><line x1="712" y1="1370.5" x2="1587" y2="1370.5"/><line x1="712" y1="1251.5" x2="1587" y2="1251.5"/><line x1="712" y1="1132.5" x2="1587" y2="1132.5"/><line x1="712" y1="1013.5" x2="1587" y2="1013.5"/><line x1="712" y1="893.5" x2="1587" y2="893.5"/></g><g fill="none"><line x1="706.7" y1="781.5" x2="706.7" y2="1411.3" stroke-width="1.4" stroke="#2a2a2a"/><line x1="714.4" y1="1419.4" x2="1580.5" y2="1419.4" stroke-width="1.4" stroke="#111"/><line x1="702.2" y1="1401.1" x2="706.2" y2="1401.1" stroke-width="1.4" stroke="#444"/><line x1="698.2" y1="1371.2" x2="706.2" y2="1371.2" stroke-width="1.4" stroke="#444"/><line x1="702.2" y1="1341.4" x2="706.2" y2="1341.4" stroke-width="1.4" stroke="#444"/><line x1="702.2" y1="1311.6" x2="706.2" y2="1311.6" stroke-width="1.4" stroke="#444"/><line x1="702.2" y1="1281.8" x2="706.2" y2="1281.8" stroke-width="1.4" stroke="#444"/><line x1="698.2" y1="1252.0" x2="706.2" y2="1252.0" stroke-width="1.4" stroke="#444"/><line x1="702.2" y1="1222.1" x2="706.2" y2="1222.1" stroke-width="1.4" stroke="#444"/><line x1="702.2" y1="1192.3" x2="706.2" y2="1192.3" stroke-width="1.4" stroke="#444"/><line x1="702.2" y1="1162.5" x2="706.2" y2="1162.5" stroke-width="1.4" stroke="#444"/><line x1="698.2" y1="1132.7" x2="706.2" y2="1132.7" stroke-width="1.4" stroke="#444"/><line x1="702.2" y1="1102.8" x2="706.2" y2="1102.8" stroke-width="1.4" stroke="#444"/><line x1="702.2" y1="1073.0" x2="706.2" y2="1073.0" stroke-width="1.4" stroke="#444"/><line x1="702.2" y1="1043.2" x2="706.2" y2="1043.2" stroke-width="1.4" stroke="#444"/><line x1="698.2" y1="1013.3" x2="706.2" y2="1013.3" stroke-width="1.4" stroke="#444"/><line x1="702.2" y1="983.5" x2="706.2" y2="983.5" stroke-width="1.4" stroke="#444"/><line x1="702.2" y1="953.7" x2="706.2" y2="953.7" stroke-width="1.4" stroke="#444"/><line x1="702.2" y1="923.9" x2="706.2" y2="923.9" stroke-width="1.4" stroke="#444"/><line x1="698.2" y1="894.0" x2="706.2" y2="894.0" stroke-width="1.4" stroke="#444"/><line x1="702.2" y1="864.2" x2="706.2" y2="864.2" stroke-width="1.4" stroke="#444"/><line x1="702.2" y1="834.4" x2="706.2" y2="834.4" stroke-width="1.4" stroke="#444"/><line x1="702.2" y1="804.6" x2="706.2" y2="804.6" stroke-width="1.4" stroke="#444"/><line x1="734.2" y1="1419.4" x2="734.2" y2="1422.6" stroke-width="1.3" stroke="#222"/><line x1="770.3" y1="1419.4" x2="770.3" y2="1424.6" stroke-width="1.3" stroke="#222"/><line x1="806.4" y1="1419.4" x2="806.4" y2="1422.6" stroke-width="1.3" stroke="#222"/><line x1="842.5" y1="1419.4" x2="842.5" y2="1424.6" stroke-width="1.3" stroke="#222"/><line x1="878.6" y1="1419.4" x2="878.6" y2="1422.6" stroke-width="1.3" stroke="#222"/><line x1="914.7" y1="1419.4" x2="914.7" y2="1424.6" stroke-width="1.3" stroke="#222"/><line x1="950.8" y1="1419.4" x2="950.8" y2="1422.6" stroke-width="1.3" stroke="#222"/><line x1="986.9" y1="1419.4" x2="986.9" y2="1424.6" stroke-width="1.3" stroke="#222"/><line x1="1023.0" y1="1419.4" x2="1023.0" y2="1422.6" stroke-width="1.3" stroke="#222"/><line x1="1059.2" y1="1419.4" x2="1059.2" y2="1424.6" stroke-width="1.3" stroke="#222"/><line x1="1095.3" y1="1419.4" x2="1095.3" y2="1422.6" stroke-width="1.3" stroke="#222"/><line x1="1131.4" y1="1419.4" x2="1131.4" y2="1424.6" stroke-width="1.3" stroke="#222"/><line x1="1167.5" y1="1419.4" x2="1167.5" y2="1422.6" stroke-width="1.3" stroke="#222"/><line x1="1203.6" y1="1419.4" x2="1203.6" y2="1424.6" stroke-width="1.3" stroke="#222"/><line x1="1239.7" y1="1419.4" x2="1239.7" y2="1422.6" stroke-width="1.3" stroke="#222"/><line x1="1275.8" y1="1419.4" x2="1275.8" y2="1424.6" stroke-width="1.3" stroke="#222"/><line x1="1311.9" y1="1419.4" x2="1311.9" y2="1422.6" stroke-width="1.3" stroke="#222"/><line x1="1348.0" y1="1419.4" x2="1348.0" y2="1424.6" stroke-width="1.3" stroke="#222"/><line x1="1384.1" y1="1419.4" x2="1384.1" y2="1422.6" stroke-width="1.3" stroke="#222"/><line x1="1420.2" y1="1419.4" x2="1420.2" y2="1424.6" stroke-width="1.3" stroke="#222"/><line x1="1456.3" y1="1419.4" x2="1456.3" y2="1422.6" stroke-width="1.3" stroke="#222"/><line x1="1492.4" y1="1419.4" x2="1492.4" y2="1424.6" stroke-width="1.3" stroke="#222"/><line x1="1528.5" y1="1419.4" x2="1528.5" y2="1422.6" stroke-width="1.3" stroke="#222"/><line x1="1564.6" y1="1419.4" x2="1564.6" y2="1424.6" stroke-width="1.3" stroke="#222"/></g>
</svg>
<div style="position:absolute;top:299.00px;font-size:11px;line-height:1;white-space:nowrap;color:#2a2a2a;right:1113.00px;transform:scaleX(0.955);transform-origin:100% 0;">1.00K</div>
<div style="position:absolute;top:498.00px;font-size:11px;line-height:1;white-space:nowrap;color:#2a2a2a;right:1113.00px;transform:scaleX(0.955);transform-origin:100% 0;">100</div>
<div style="position:absolute;top:697.00px;font-size:11px;line-height:1;white-space:nowrap;color:#2a2a2a;right:1113.00px;transform:scaleX(0.955);transform-origin:100% 0;">10.0</div>
<div style="position:absolute;top:726.00px;font-size:11px;line-height:1;white-space:nowrap;color:#2a2a2a;left:209.70px;width:600px;text-align:center;transform:scaleX(0.955);transform-origin:50% 0;">1.00</div>
<div style="position:absolute;top:726.00px;font-size:11px;line-height:1;white-space:nowrap;color:#2a2a2a;left:344.70px;width:600px;text-align:center;transform:scaleX(0.955);transform-origin:50% 0;">10.0</div>
<div style="position:absolute;top:726.00px;font-size:11px;line-height:1;white-space:nowrap;color:#2a2a2a;left:479.70px;width:600px;text-align:center;transform:scaleX(0.955);transform-origin:50% 0;">100</div>
<div style="position:absolute;top:726.00px;font-size:11px;line-height:1;white-space:nowrap;color:#2a2a2a;left:614.70px;width:600px;text-align:center;transform:scaleX(0.955);transform-origin:50% 0;">1.00K</div>
<div style="position:absolute;top:726.00px;font-size:11px;line-height:1;white-space:nowrap;color:#2a2a2a;left:749.70px;width:600px;text-align:center;transform:scaleX(0.955);transform-origin:50% 0;">10.0K</div>
<div style="position:absolute;top:726.00px;font-size:11px;line-height:1;white-space:nowrap;color:#2a2a2a;left:884.70px;width:600px;text-align:center;transform:scaleX(0.955);transform-origin:50% 0;">100.0K</div>
<div style="position:absolute;top:696.00px;font-size:11px;line-height:1;white-space:nowrap;color:#2a2a2a;left:1320.80px;transform:scaleX(0.955);transform-origin:0 0;">0.00</div>
<div style="position:absolute;top:597.00px;font-size:11px;line-height:1;white-space:nowrap;color:#2a2a2a;left:1320.80px;transform:scaleX(0.955);transform-origin:0 0;">10.0</div>
<div style="position:absolute;top:498.00px;font-size:11px;line-height:1;white-space:nowrap;color:#2a2a2a;left:1320.80px;transform:scaleX(0.955);transform-origin:0 0;">20.0</div>
<div style="position:absolute;top:399.00px;font-size:11px;line-height:1;white-space:nowrap;color:#2a2a2a;left:1320.80px;transform:scaleX(0.955);transform-origin:0 0;">30.0</div>
<div style="position:absolute;top:299.00px;font-size:11px;line-height:1;white-space:nowrap;color:#2a2a2a;left:1320.80px;transform:scaleX(0.955);transform-origin:0 0;">40.0</div>
<div style="position:absolute;top:200.00px;font-size:11px;line-height:1;white-space:nowrap;color:#2a2a2a;left:1320.80px;transform:scaleX(0.955);transform-origin:0 0;">50.0</div>
<div style="position:absolute;top:740.00px;font-size:13.5px;line-height:1;white-space:nowrap;color:#000;font-weight:bold;left:603.00px;width:600px;text-align:center;transform:scaleX(0.81);transform-origin:50% 0;">frequency / Hz</div>
<div style="position:absolute;left:299.1px;top:403.2px;width:300px;text-align:center;font-size:13.5px;line-height:1;font-weight:bold;white-space:nowrap;transform:rotate(-90deg) scaleX(0.825)">impedance / Ω</div>
<div style="position:absolute;left:1202.2px;top:403.2px;width:300px;text-align:center;font-size:13.5px;line-height:1;font-weight:bold;white-space:nowrap;transform:rotate(90deg) scaleX(0.82)">phase / deg / <span style="font-weight:normal;color:#444">°</span></div>
<div style="position:absolute;top:1366.00px;font-size:12.6px;line-height:1;white-space:nowrap;color:#161616;right:907.20px;transform:scaleX(0.95);transform-origin:100% 0;">0.00</div>
<div style="position:absolute;top:1247.00px;font-size:12.6px;line-height:1;white-space:nowrap;color:#161616;right:907.20px;transform:scaleX(0.95);transform-origin:100% 0;">-200</div>
<div style="position:absolute;top:1128.00px;font-size:12.6px;line-height:1;white-space:nowrap;color:#161616;right:907.20px;transform:scaleX(0.95);transform-origin:100% 0;">-400</div>
<div style="position:absolute;top:1008.00px;font-size:12.6px;line-height:1;white-space:nowrap;color:#161616;right:907.20px;transform:scaleX(0.95);transform-origin:100% 0;">-600</div>
<div style="position:absolute;top:889.00px;font-size:12.6px;line-height:1;white-space:nowrap;color:#161616;right:907.20px;transform:scaleX(0.95);transform-origin:100% 0;">-800</div>
<div style="position:absolute;top:1430.00px;font-size:12.6px;line-height:1;white-space:nowrap;color:#161616;left:541.92px;width:600px;text-align:center;">200</div>
<div style="position:absolute;top:1430.00px;font-size:12.6px;line-height:1;white-space:nowrap;color:#161616;left:686.34px;width:600px;text-align:center;">400</div>
<div style="position:absolute;top:1430.00px;font-size:12.6px;line-height:1;white-space:nowrap;color:#161616;left:830.76px;width:600px;text-align:center;">600</div>
<div style="position:absolute;top:1430.00px;font-size:12.6px;line-height:1;white-space:nowrap;color:#161616;left:975.18px;width:600px;text-align:center;">800</div>
<div style="position:absolute;top:1430.00px;font-size:12.6px;line-height:1;white-space:nowrap;color:#161616;left:1119.60px;width:600px;text-align:center;">1.00K</div>
<div style="position:absolute;top:1430.00px;font-size:12.6px;line-height:1;white-space:nowrap;color:#161616;left:1264.02px;width:600px;text-align:center;">1.20K</div>
<div style="position:absolute;top:1447.00px;font-size:12.8px;line-height:1;white-space:nowrap;color:#000;font-weight:bold;left:847.60px;width:600px;text-align:center;">impedance' / Ω</div>
<div style="position:absolute;left:508.4px;top:1089.2px;width:300px;text-align:center;font-size:14.5px;line-height:1;font-weight:bold;white-space:nowrap;transform:rotate(-90deg) scaleX(0.8)">impedance" / Ω</div>
<div style="position:absolute;left:1375.6px;top:118.0px;font-size:11px;line-height:1;font-weight:bold;white-space:nowrap;transform:scaleX(0.735);transform-origin:0 0">Fit Impedance Spectrum to Model</div>
<div style="position:absolute;top:148.00px;font-size:10.4px;line-height:1;white-space:nowrap;color:#000;left:1381.00px;">Model:</div>
<div style="position:absolute;top:170.00px;font-size:10.4px;line-height:1;white-space:nowrap;color:#000;left:1381.00px;">Data:</div>
<div style="position:absolute;left:1467px;top:143.2px;width:124px;height:17.2px;box-sizing:border-box;background:#d9d9d9;border:1px solid #9c9c9c;"></div>
<div style="position:absolute;top:148.00px;font-size:10.4px;line-height:1;white-space:nowrap;color:#000;left:1471.00px;">New Model</div>
<div style="position:absolute;left:1467px;top:165.9px;width:124px;height:17.2px;box-sizing:border-box;background:#d9d9d9;border:1px solid #9c9c9c;"></div>
<div style="position:absolute;top:170.00px;font-size:10.4px;line-height:1;white-space:nowrap;color:#000;left:1471.00px;">1K+1u+100.ism</div>
<div style="position:absolute;top:208.00px;font-size:10.4px;line-height:1;white-space:nowrap;color:#000;left:1381.00px;">Sample Source:</div>
<div style="position:absolute;top:192.00px;font-size:10.4px;line-height:1;white-space:nowrap;color:#000;left:1483.80px;">Original</div>
<div style="position:absolute;top:208.00px;font-size:10.4px;line-height:1;white-space:nowrap;color:#000;left:1483.80px;">Smoothed</div>
<div style="position:absolute;top:224.00px;font-size:10.4px;line-height:1;white-space:nowrap;color:#000;left:1483.80px;">ZHit</div>
<div style="position:absolute;top:243.00px;font-size:10.4px;line-height:1;white-space:nowrap;color:#000;left:1381.00px;">Number of</div>
<div style="position:absolute;top:255.00px;font-size:10.4px;line-height:1;white-space:nowrap;color:#000;left:1381.00px;">Samples:</div>
<div style="position:absolute;left:1467px;top:244.2px;width:124px;height:17.7px;box-sizing:border-box;background:#fff;border:1px solid #6a6a6a;"></div>
<div style="position:absolute;top:249.00px;font-size:10.4px;line-height:1;white-space:nowrap;color:#000;left:1470.50px;">65</div>
<div style="position:absolute;left:1577px;top:246px;width:12.5px;height:14px;box-sizing:border-box;background:#ececec;border:1px solid #bdbdbd;"></div>
<div style="position:absolute;top:273.00px;font-size:10.4px;line-height:1;white-space:nowrap;color:#000;left:1381.00px;">Lower</div>
<div style="position:absolute;top:285.00px;font-size:10.4px;line-height:1;white-space:nowrap;color:#000;left:1381.00px;">Limit:</div>
<div style="position:absolute;top:280.00px;font-size:10.4px;line-height:1;white-space:nowrap;color:#000;left:1424.60px;">none</div>
<div style="position:absolute;top:303.00px;font-size:10.4px;line-height:1;white-space:nowrap;color:#000;left:1381.00px;">Upper</div>
<div style="position:absolute;top:315.00px;font-size:10.4px;line-height:1;white-space:nowrap;color:#000;left:1381.00px;">Limit:</div>
<div style="position:absolute;top:310.00px;font-size:10.4px;line-height:1;white-space:nowrap;color:#000;left:1424.60px;">none</div>
<div style="position:absolute;left:1546px;top:274.2px;width:44px;height:17.80000000000001px;box-sizing:border-box;background:#dddddd;border:1px solid #a3a3a3;box-shadow:inset 0 0 0 1px #e6e6e6;"></div>
<div style="position:absolute;left:1546px;top:304.3px;width:44px;height:17.399999999999977px;box-sizing:border-box;background:#dddddd;border:1px solid #a3a3a3;box-shadow:inset 0 0 0 1px #e6e6e6;"></div>
<div style="position:absolute;top:279.00px;font-size:10.4px;line-height:1;white-space:nowrap;color:#000;left:1268.00px;width:600px;text-align:center;">select</div>
<div style="position:absolute;top:309.00px;font-size:10.4px;line-height:1;white-space:nowrap;color:#000;left:1268.00px;width:600px;text-align:center;">select</div>
<div style="position:absolute;left:1381.8px;top:331.8px;width:141.0px;height:16.80000000000001px;box-sizing:border-box;background:#dddddd;border:1px solid #a3a3a3;box-shadow:inset 0 0 0 1px #e6e6e6;"></div>
<div style="position:absolute;top:336.00px;font-size:10.4px;line-height:1;white-space:nowrap;color:#000;left:1152.40px;width:600px;text-align:center;">Fit</div>
<div style="position:absolute;left:1529px;top:331.8px;width:61px;height:16.8px;box-sizing:border-box;background:#c7c7c7;border:1px solid #bcbcbc;"></div>
<div style="position:absolute;top:336.00px;font-size:10.4px;line-height:1;white-space:nowrap;color:#3c3c3c;left:1259.50px;width:600px;text-align:center;">Abort Fit</div>
<div style="position:absolute;left:1388.2px;top:380.2px;width:195px;height:159.6px;box-sizing:border-box;background:#fff;border:1px solid #6e6e6e;"></div>
<div style="position:absolute;left:1389.2px;top:381.2px;width:193px;height:157.6px;overflow:hidden">
<div style="position:absolute;left:-54.6px;width:200px;text-align:center;top:5.8px;font-size:10.4px;line-height:1;white-space:nowrap;transform:scaleX(1.0)">Element</div>
<div style="position:absolute;left:27.8px;width:200px;text-align:center;top:5.8px;font-size:10.4px;line-height:1;white-space:nowrap;transform:scaleX(1.0)">Value</div>
<div style="position:absolute;left:111.8px;width:200px;text-align:center;top:5.8px;font-size:10.4px;line-height:1;white-space:nowrap;transform:scaleX(1.0)">Significance</div>
<div style="position:absolute;left:6.2px;top:27.8px;font-size:10.4px;line-height:1;white-space:nowrap;transform:scaleX(1.0);transform-origin:0 0">resistor (R)</div>
<div style="position:absolute;left:89.5px;top:27.8px;font-size:10.4px;line-height:1;white-space:nowrap;transform:scaleX(1.0);transform-origin:0 0">993 Ω</div>
<div style="position:absolute;left:172.4px;top:27.8px;font-size:10.4px;line-height:1;white-space:nowrap;transform:scaleX(1.0);transform-origin:0 0">0.909</div>
<div style="position:absolute;left:6.2px;top:52.8px;font-size:10.4px;line-height:1;white-space:nowrap;transform:scaleX(1.0);transform-origin:0 0">capacitor (C)</div>
<div style="position:absolute;left:89.5px;top:52.8px;font-size:10.4px;line-height:1;white-space:nowrap;transform:scaleX(1.0);transform-origin:0 0">992 nF</div>
<div style="position:absolute;left:172.4px;top:52.8px;font-size:10.4px;line-height:1;white-space:nowrap;transform:scaleX(1.0);transform-origin:0 0">0.747</div>
<div style="position:absolute;left:6.2px;top:77.8px;font-size:10.4px;line-height:1;white-space:nowrap;transform:scaleX(1.0);transform-origin:0 0">resistor (R)</div>
<div style="position:absolute;left:89.5px;top:77.8px;font-size:10.4px;line-height:1;white-space:nowrap;transform:scaleX(1.0);transform-origin:0 0">99.7 Ω</div>
<div style="position:absolute;left:172.4px;top:77.8px;font-size:10.4px;line-height:1;white-space:nowrap;transform:scaleX(1.0);transform-origin:0 0">1.000</div>
<div style="position:absolute;left:2.5px;top:44.3px;width:200px;height:1px;background:#d4d4d4"></div>
<div style="position:absolute;left:2.5px;top:69.1px;width:200px;height:1px;background:#d4d4d4"></div>
<div style="position:absolute;left:2.5px;top:94.2px;width:200px;height:1px;background:#d4d4d4"></div>
<div style="position:absolute;left:86.1px;top:0;width:1px;height:94.2px;background:#d4d4d4"></div>
<div style="position:absolute;left:169.3px;top:0;width:1px;height:94.2px;background:#d4d4d4"></div>
<div style="position:absolute;left:2.5px;top:0;width:1px;height:94.2px;background:#e4e4e4"></div>
<div style="position:absolute;left:0;top:144.6px;width:193px;height:13px;background:#f0f0f0"></div>
<div style="position:absolute;left:14.0px;top:144.6px;width:82.7px;height:13px;background:#bdbdbb"></div>
</div>
<div style="position:absolute;top:547.00px;font-size:10.4px;line-height:1;white-space:nowrap;color:#000;right:61.10px;">Mean</div>
<div style="position:absolute;top:547.00px;font-size:10.4px;line-height:1;white-space:nowrap;color:#000;right:30.50px;">Max</div>
<div style="position:absolute;top:565.00px;font-size:10.4px;line-height:1;white-space:nowrap;color:#000;left:1388.50px;">Modulus Impedance Error:</div>
<div style="position:absolute;top:565.00px;font-size:10.4px;line-height:1;white-space:nowrap;color:#000;right:54.00px;">0.05%</div>
<div style="position:absolute;top:565.00px;font-size:10.4px;line-height:1;white-space:nowrap;color:#000;right:17.00px;">1.76%</div>
<div style="position:absolute;top:582.00px;font-size:10.4px;line-height:1;white-space:nowrap;color:#000;left:1388.50px;">Phase Angle Error:</div>
<div style="position:absolute;top:582.00px;font-size:10.4px;line-height:1;white-space:nowrap;color:#000;right:54.00px;">0.03°</div>
<div style="position:absolute;top:582.00px;font-size:10.4px;line-height:1;white-space:nowrap;color:#000;right:17.00px;">0.70°</div>
<div style="position:absolute;top:600.00px;font-size:10.4px;line-height:1;white-space:nowrap;color:#000;left:1388.50px;">Overall Error:</div>
<div style="position:absolute;top:600.00px;font-size:10.4px;line-height:1;white-space:nowrap;color:#000;right:17.00px;">0.88%</div>
<div style="position:absolute;top:371.00px;font-size:10.6px;line-height:1;white-space:nowrap;color:#000;left:-153.30px;width:600px;text-align:center;transform:scaleX(0.97);transform-origin:50% 0;">993 Ω</div>
<div style="position:absolute;top:371.00px;font-size:10.6px;line-height:1;white-space:nowrap;color:#000;left:8.20px;width:600px;text-align:center;transform:scaleX(0.97);transform-origin:50% 0;">99.7 Ω</div>
<div style="position:absolute;top:424.00px;font-size:10.6px;line-height:1;white-space:nowrap;color:#000;left:-151.50px;width:600px;text-align:center;transform:scaleX(0.97);transform-origin:50% 0;">992 nF</div>
<div style="position:absolute;top:1194.00px;font-size:11.6px;line-height:1;white-space:nowrap;color:#000;left:-97.50px;width:600px;text-align:center;transform:scaleX(1.06);transform-origin:50% 0;">993 Ω</div>
<div style="position:absolute;top:1194.00px;font-size:11.6px;line-height:1;white-space:nowrap;color:#000;left:91.20px;width:600px;text-align:center;transform:scaleX(1.06);transform-origin:50% 0;">99.7 Ω</div>
<div style="position:absolute;top:1251.00px;font-size:11.6px;line-height:1;white-space:nowrap;color:#000;left:-95.20px;width:600px;text-align:center;transform:scaleX(1.06);transform-origin:50% 0;">992 nF</div>
<div style="position:absolute;left:737px;top:789.8px;width:444px;height:144.5px;box-sizing:border-box;background:#fff;"></div>
<div style="position:absolute;left:737px;top:789.8px;width:444px;height:7.5px;box-sizing:border-box;background:#e6e6e6;"></div>
<div style="position:absolute;left:737px;top:796.6px;width:444px;height:1.4px;box-sizing:border-box;background:#8c8c8c;"></div>
<div style="position:absolute;left:737px;top:796.6px;width:1.5px;height:138px;box-sizing:border-box;background:#8c8c8c;"></div>
<div style="position:absolute;left:741.5px;top:799px;width:1px;height:122.5px;box-sizing:border-box;background:#d6d6d6;"></div>
<div style="position:absolute;left:849px;top:799px;width:1px;height:122.5px;box-sizing:border-box;background:#d6d6d6;"></div>
<div style="position:absolute;left:957px;top:799px;width:1px;height:122.5px;box-sizing:border-box;background:#d6d6d6;"></div>
<div style="position:absolute;left:1064.6px;top:799px;width:1px;height:122.5px;box-sizing:border-box;background:#d6d6d6;"></div>
<div style="position:absolute;left:1172.4px;top:799px;width:1px;height:122.5px;box-sizing:border-box;background:#d6d6d6;"></div>
<div style="position:absolute;left:741.5px;top:856.2px;width:431.5px;height:1px;box-sizing:border-box;background:#d6d6d6;"></div>
<div style="position:absolute;left:741.5px;top:888.8px;width:431.5px;height:1px;box-sizing:border-box;background:#d6d6d6;"></div>
<div style="position:absolute;left:741.5px;top:921px;width:431.5px;height:1px;box-sizing:border-box;background:#d6d6d6;"></div>
<div style="position:absolute;top:806.00px;font-size:13.2px;line-height:1;white-space:nowrap;color:#000;left:495.80px;width:600px;text-align:center;transform:scaleX(1.03);transform-origin:50% 0;">Element</div>
<div style="position:absolute;top:806.00px;font-size:13.2px;line-height:1;white-space:nowrap;color:#000;left:603.20px;width:600px;text-align:center;transform:scaleX(1.03);transform-origin:50% 0;">Value</div>
<div style="position:absolute;top:806.00px;font-size:13.2px;line-height:1;white-space:nowrap;color:#000;left:711.00px;width:600px;text-align:center;transform:scaleX(1.03);transform-origin:50% 0;">Significance</div>
<div style="position:absolute;top:806.00px;font-size:13.2px;line-height:1;white-space:nowrap;color:#000;left:818.50px;width:600px;text-align:center;transform:scaleX(1.03);transform-origin:50% 0;">Error</div>
<div style="position:absolute;top:834.00px;font-size:13.2px;line-height:1;white-space:nowrap;color:#000;left:745.70px;transform:scaleX(1.03);transform-origin:0 0;">resistor (R)</div>
<div style="position:absolute;top:834.00px;font-size:13.2px;line-height:1;white-space:nowrap;color:#000;left:853.50px;transform:scaleX(1.03);transform-origin:0 0;">993 Ω</div>
<div style="position:absolute;top:834.00px;font-size:13.2px;line-height:1;white-space:nowrap;color:#000;left:961.00px;transform:scaleX(1.03);transform-origin:0 0;">0.909</div>
<div style="position:absolute;top:834.00px;font-size:13.2px;line-height:1;white-space:nowrap;color:#000;left:1068.80px;transform:scaleX(1.03);transform-origin:0 0;">0.16%</div>
<div style="position:absolute;top:866.00px;font-size:13.2px;line-height:1;white-space:nowrap;color:#000;left:745.70px;transform:scaleX(1.03);transform-origin:0 0;">capacitor (C)</div>
<div style="position:absolute;top:866.00px;font-size:13.2px;line-height:1;white-space:nowrap;color:#000;left:853.50px;transform:scaleX(1.03);transform-origin:0 0;">992 nF</div>
<div style="position:absolute;top:866.00px;font-size:13.2px;line-height:1;white-space:nowrap;color:#000;left:961.00px;transform:scaleX(1.03);transform-origin:0 0;">0.747</div>
<div style="position:absolute;top:866.00px;font-size:13.2px;line-height:1;white-space:nowrap;color:#000;left:1068.80px;transform:scaleX(1.03);transform-origin:0 0;">0.47%</div>
<div style="position:absolute;top:899.00px;font-size:13.2px;line-height:1;white-space:nowrap;color:#000;left:745.70px;transform:scaleX(1.03);transform-origin:0 0;">resistor (R)</div>
<div style="position:absolute;top:899.00px;font-size:13.2px;line-height:1;white-space:nowrap;color:#000;left:853.50px;transform:scaleX(1.03);transform-origin:0 0;">99.7 Ω</div>
<div style="position:absolute;top:899.00px;font-size:13.2px;line-height:1;white-space:nowrap;color:#000;left:961.00px;transform:scaleX(1.03);transform-origin:0 0;">1.000</div>
<div style="position:absolute;top:899.00px;font-size:13.2px;line-height:1;white-space:nowrap;color:#000;left:1068.80px;transform:scaleX(1.03);transform-origin:0 0;">1.77%</div>
<div style="position:absolute;left:1122.5px;top:938.8px;width:448px;height:109.4px;box-sizing:border-box;background:#ebebeb;"></div>
<div style="position:absolute;top:945.00px;font-size:13.9px;line-height:1;white-space:nowrap;color:#000;right:180.40px;transform:scaleX(1.025);transform-origin:100% 0;">Mean</div>
<div style="position:absolute;top:945.00px;font-size:13.9px;line-height:1;white-space:nowrap;color:#000;right:65.40px;transform:scaleX(1.025);transform-origin:100% 0;">Max</div>
<div style="position:absolute;top:969.00px;font-size:13.9px;line-height:1;white-space:nowrap;color:#000;left:1131.90px;transform:scaleX(1.025);transform-origin:0 0;">Modulus Impedance Error:</div>
<div style="position:absolute;top:969.00px;font-size:13.9px;line-height:1;white-space:nowrap;color:#000;right:179.50px;transform:scaleX(1.025);transform-origin:100% 0;">0.05%</div>
<div style="position:absolute;top:969.00px;font-size:13.9px;line-height:1;white-space:nowrap;color:#000;right:56.70px;transform:scaleX(1.025);transform-origin:100% 0;">1.76%</div>
<div style="position:absolute;top:993.00px;font-size:13.9px;line-height:1;white-space:nowrap;color:#000;left:1131.90px;transform:scaleX(1.025);transform-origin:0 0;">Phase Angle Error:</div>
<div style="position:absolute;top:993.00px;font-size:13.9px;line-height:1;white-space:nowrap;color:#000;right:179.50px;transform:scaleX(1.025);transform-origin:100% 0;">0.03°</div>
<div style="position:absolute;top:993.00px;font-size:13.9px;line-height:1;white-space:nowrap;color:#000;right:56.70px;transform:scaleX(1.025);transform-origin:100% 0;">0.70°</div>
<div style="position:absolute;top:1018.00px;font-size:13.9px;line-height:1;white-space:nowrap;color:#000;left:1131.90px;transform:scaleX(1.025);transform-origin:0 0;">Overall Error:</div>
<div style="position:absolute;top:1018.00px;font-size:13.9px;line-height:1;white-space:nowrap;color:#000;right:56.70px;transform:scaleX(1.025);transform-origin:100% 0;">0.88%</div>
<svg width="1600" height="1464" viewBox="0 0 1600 1464" style="position:absolute;left:0;top:0;overflow:visible">
<polyline points="1487.1,1367.6 1487.1,1367.4 1487.1,1367.3 1487.1,1367.1 1487.1,1367.0 1487.1,1366.8 1487.1,1366.6 1487.1,1366.5 1487.1,1366.3 1487.1,1366.1 1487.1,1365.9 1487.1,1365.7 1487.1,1365.4 1487.1,1365.2 1487.1,1365.0 1487.1,1364.7 1487.0,1364.5 1487.0,1364.2 1487.0,1363.9 1487.0,1363.7 1487.0,1363.4 1487.0,1363.0 1487.0,1362.7 1487.0,1362.4 1487.0,1362.0 1487.0,1361.7 1486.9,1361.3 1486.9,1360.9 1486.9,1360.5 1486.9,1360.1 1486.9,1359.7 1486.8,1359.2 1486.8,1358.7 1486.8,1358.2 1486.8,1357.7 1486.7,1357.2 1486.7,1356.7 1486.7,1356.1 1486.6,1355.5 1486.6,1354.9 1486.5,1354.2 1486.5,1353.6 1486.4,1352.9 1486.4,1352.2 1486.3,1351.4 1486.3,1350.7 1486.2,1349.9 1486.1,1349.0 1486.0,1348.2 1486.0,1347.3 1485.9,1346.3 1485.8,1345.3 1485.7,1344.3 1485.5,1343.3 1485.4,1342.2 1485.3,1341.1 1485.1,1339.9 1485.0,1338.7 1484.8,1337.4 1484.6,1336.1 1484.4,1334.7 1484.2,1333.3 1484.0,1331.8 1483.7,1330.3 1483.4,1328.7 1483.1,1327.1 1482.8,1325.4 1482.5,1323.6 1482.1,1321.8 1481.7,1319.9 1481.3,1317.9 1480.8,1315.8 1480.3,1313.7 1479.8,1311.5 1479.2,1309.2 1478.6,1306.8 1477.9,1304.4 1477.2,1301.8 1476.4,1299.2 1475.5,1296.5 1474.6,1293.6 1473.6,1290.7 1472.6,1287.7 1471.4,1284.6 1470.2,1281.3 1468.9,1278.0 1467.5,1274.5 1466.0,1271.0 1464.3,1267.3 1462.6,1263.5 1460.7,1259.6 1458.7,1255.6 1456.5,1251.4 1454.1,1247.2 1451.6,1242.8 1449.0,1238.3 1446.1,1233.7 1443.0,1228.9 1439.7,1224.1 1436.2,1219.1 1432.5,1214.1 1428.5,1208.9 1424.2,1203.6 1419.6,1198.3 1414.8,1192.9 1409.7,1187.4 1404.2,1181.8 1398.4,1176.2 1392.3,1170.5 1385.8,1164.9 1378.9,1159.2 1371.6,1153.5 1364.0,1147.9 1356.0,1142.3 1347.6,1136.7 1338.7,1131.3 1329.5,1125.9 1319.9,1120.7 1309.8,1115.7 1299.4,1110.8 1288.5,1106.2 1277.3,1101.8 1265.8,1097.6 1253.8,1093.7 1241.6,1090.2 1229.1,1087.0 1216.3,1084.1 1203.2,1081.6 1189.9,1079.5 1176.5,1077.7 1162.9,1076.4 1149.3,1075.6 1135.5,1075.1 1121.8,1075.1 1108.0,1075.6 1094.3,1076.4 1080.8,1077.7 1067.3,1079.4 1054.1,1081.6 1041.0,1084.1 1028.2,1086.9 1015.7,1090.2 1003.4,1093.7 991.5,1097.6 979.9,1101.8 968.7,1106.2 957.9,1110.8 947.5,1115.7 937.4,1120.7 927.8,1125.9 918.5,1131.3 909.7,1136.7 901.3,1142.2 893.2,1147.8 885.6,1153.5 878.4,1159.2 871.5,1164.9 865.0,1170.5 858.9,1176.2 853.1,1181.8 847.6,1187.3 842.4,1192.8 837.6,1198.3 833.0,1203.6 828.8,1208.9 824.8,1214.0 821.0,1219.1 817.5,1224.1 814.2,1228.9 811.1,1233.6 808.3,1238.3 805.6,1242.8 803.1,1247.1 800.8,1251.4 798.6,1255.6 796.6,1259.6 794.7,1263.5 792.9,1267.3 791.3,1271.0 789.8,1274.5 788.3,1278.0 787.0,1281.3 785.8,1284.6 784.7,1287.7 783.6,1290.7 782.6,1293.6 781.7,1296.5 780.9,1299.2 780.1,1301.8 779.4,1304.4 778.7,1306.8 778.1,1309.2 777.5,1311.5 776.9,1313.7 776.4,1315.8 776.0,1317.9 775.5,1319.9 775.1,1321.8 774.8,1323.6 774.4,1325.4 774.1,1327.1 773.8,1328.7 773.5,1330.3 773.3,1331.8 773.0,1333.3 772.8,1334.7 772.6,1336.1 772.4,1337.4 772.3,1338.7 772.1,1339.9 772.0,1341.1 771.8,1342.2 771.7,1343.3 771.6,1344.3 771.5,1345.3 771.4,1346.3 771.3,1347.3 771.2,1348.2 771.1,1349.0 771.0,1349.9 771.0,1350.7 770.9,1351.4 770.8,1352.2 770.8,1352.9 770.7,1353.6 770.7,1354.2 770.6,1354.9 770.6,1355.5 770.6,1356.1 770.5,1356.7 770.5,1357.2 770.5,1357.7 770.4,1358.2 770.4,1358.7 770.4,1359.2 770.4,1359.7 770.3,1360.1 770.3,1360.5 770.3,1360.9 770.3,1361.3 770.3,1361.7 770.3,1362.0 770.3,1362.4 770.2,1362.7 770.2,1363.0 770.2,1363.4 770.2,1363.6 770.2,1363.9 770.2,1364.2 770.2,1364.5 770.2,1364.7 770.2,1365.0 770.2,1365.2 770.2,1365.4 770.2,1365.7 770.2,1365.9 770.1,1366.1 770.1,1366.3 770.1,1366.5 770.1,1366.6 770.1,1366.8 770.1,1367.0 770.1,1367.1 770.1,1367.3 770.1,1367.4 770.1,1367.6 770.1,1367.7 770.1,1367.9 770.1,1368.0 770.1,1368.1 770.1,1368.2 770.1,1368.3 770.1,1368.4 770.1,1368.6 770.1,1368.7 770.1,1368.8 770.1,1368.8 770.1,1368.9 770.1,1369.0 770.1,1369.1 770.1,1369.2 770.1,1369.3 770.1,1369.3 770.1,1369.4 770.1,1369.5 770.1,1369.5 770.1,1369.6 770.1,1369.7 770.1,1369.7 770.1,1369.8 770.1,1369.8 770.1,1369.9 770.1,1369.9 770.1,1370.0 770.1,1370.0 770.1,1370.1 770.1,1370.1 770.1,1370.2 770.1,1370.2 770.1,1370.3 770.1,1370.3 770.1,1370.3 770.1,1370.4 770.1,1370.4 770.1,1370.4 770.1,1370.5 770.1,1370.5 770.1,1370.5 770.1,1370.5 770.1,1370.6 770.1,1370.6 770.1,1370.6 770.1,1370.6 770.1,1370.7 770.1,1370.7 770.1,1370.7 770.1,1370.7 770.1,1370.8 770.1,1370.8 770.1,1370.8 770.1,1370.8 770.1,1370.8 770.1,1370.8 770.1,1370.9 770.1,1370.9 770.1,1370.9 770.1,1370.9 770.1,1370.9 770.1,1370.9 770.1,1370.9 770.1,1370.9 770.1,1371.0 770.1,1371.0 770.1,1371.0 770.1,1371.0 770.1,1371.0 770.1,1371.0 770.1,1371.0 770.1,1371.0 770.1,1371.0 770.1,1371.0 770.1,1371.1 770.1,1371.1 770.1,1371.1 770.1,1371.1 770.1,1371.1 770.1,1371.1 770.1,1371.1 770.1,1371.1" stroke="#0c0ce4" stroke-width="3.6" fill="none" stroke-linejoin="round"/><circle cx="1487.1" cy="1367.6" r="4.6" stroke="#ec0c0c" stroke-width="3.4" fill="none"/><circle cx="1487.1" cy="1365.4" r="4.6" stroke="#ec0c0c" stroke-width="3.4" fill="none"/><circle cx="1487.0" cy="1362.1" r="4.6" stroke="#ec0c0c" stroke-width="3.4" fill="none"/><circle cx="1486.7" cy="1357.1" r="4.6" stroke="#ec0c0c" stroke-width="3.4" fill="none"/><circle cx="1486.2" cy="1350.2" r="4.6" stroke="#ec0c0c" stroke-width="3.4" fill="none"/><circle cx="1485.2" cy="1340.2" r="4.6" stroke="#ec0c0c" stroke-width="3.4" fill="none"/><circle cx="1483.2" cy="1327.3" r="4.6" stroke="#ec0c0c" stroke-width="3.4" fill="none"/><circle cx="1479.6" cy="1310.9" r="4.6" stroke="#ec0c0c" stroke-width="3.4" fill="none"/><circle cx="1473.1" cy="1289.2" r="4.6" stroke="#ec0c0c" stroke-width="3.4" fill="none"/><circle cx="1462.6" cy="1263.6" r="4.6" stroke="#ec0c0c" stroke-width="3.4" fill="none"/><circle cx="1446.4" cy="1234.1" r="4.6" stroke="#ec0c0c" stroke-width="3.4" fill="none"/><circle cx="1421.6" cy="1200.6" r="4.6" stroke="#ec0c0c" stroke-width="3.4" fill="none"/><circle cx="1389.4" cy="1168.0" r="4.6" stroke="#ec0c0c" stroke-width="3.4" fill="none"/><circle cx="1343.7" cy="1134.3" r="4.6" stroke="#ec0c0c" stroke-width="3.4" fill="none"/><circle cx="1283.6" cy="1104.2" r="4.6" stroke="#ec0c0c" stroke-width="3.4" fill="none"/><circle cx="1210.5" cy="1082.9" r="4.6" stroke="#ec0c0c" stroke-width="3.4" fill="none"/><circle cx="1129.4" cy="1075.1" r="4.6" stroke="#ec0c0c" stroke-width="3.4" fill="none"/><circle cx="1048.2" cy="1082.6" r="4.6" stroke="#ec0c0c" stroke-width="3.4" fill="none"/><circle cx="974.9" cy="1103.7" r="4.6" stroke="#ec0c0c" stroke-width="3.4" fill="none"/><circle cx="914.6" cy="1133.7" r="4.6" stroke="#ec0c0c" stroke-width="3.4" fill="none"/><circle cx="868.6" cy="1167.4" r="4.6" stroke="#ec0c0c" stroke-width="3.4" fill="none"/><circle cx="835.5" cy="1200.7" r="4.6" stroke="#ec0c0c" stroke-width="3.4" fill="none"/><circle cx="812.8" cy="1231.0" r="4.6" stroke="#ec0c0c" stroke-width="3.4" fill="none"/><circle cx="797.7" cy="1257.4" r="4.6" stroke="#ec0c0c" stroke-width="3.4" fill="none"/><circle cx="787.7" cy="1279.5" r="4.6" stroke="#ec0c0c" stroke-width="3.4" fill="none"/><circle cx="781.3" cy="1297.7" r="4.6" stroke="#ec0c0c" stroke-width="3.4" fill="none"/><circle cx="777.2" cy="1312.5" r="4.6" stroke="#ec0c0c" stroke-width="3.4" fill="none"/><circle cx="774.6" cy="1324.4" r="4.6" stroke="#ec0c0c" stroke-width="3.4" fill="none"/><circle cx="772.9" cy="1333.9" r="4.6" stroke="#ec0c0c" stroke-width="3.4" fill="none"/><circle cx="771.9" cy="1341.6" r="4.6" stroke="#ec0c0c" stroke-width="3.4" fill="none"/><circle cx="771.2" cy="1347.7" r="4.6" stroke="#ec0c0c" stroke-width="3.4" fill="none"/><circle cx="770.8" cy="1352.5" r="4.6" stroke="#ec0c0c" stroke-width="3.4" fill="none"/><circle cx="770.5" cy="1356.3" r="4.6" stroke="#ec0c0c" stroke-width="3.4" fill="none"/><circle cx="770.4" cy="1359.4" r="4.6" stroke="#ec0c0c" stroke-width="3.4" fill="none"/><circle cx="770.3" cy="1361.8" r="4.6" stroke="#ec0c0c" stroke-width="3.4" fill="none"/><circle cx="770.2" cy="1363.8" r="4.6" stroke="#ec0c0c" stroke-width="3.4" fill="none"/><circle cx="770.2" cy="1365.3" r="4.6" stroke="#ec0c0c" stroke-width="3.4" fill="none"/><circle cx="770.1" cy="1366.5" r="4.6" stroke="#ec0c0c" stroke-width="3.4" fill="none"/><circle cx="770.1" cy="1367.5" r="4.6" stroke="#ec0c0c" stroke-width="3.4" fill="none"/><circle cx="770.1" cy="1368.3" r="4.6" stroke="#ec0c0c" stroke-width="3.4" fill="none"/><circle cx="770.1" cy="1368.9" r="4.6" stroke="#ec0c0c" stroke-width="3.4" fill="none"/><circle cx="770.1" cy="1369.4" r="4.6" stroke="#ec0c0c" stroke-width="3.4" fill="none"/><circle cx="770.1" cy="1369.8" r="4.6" stroke="#ec0c0c" stroke-width="3.4" fill="none"/><circle cx="770.1" cy="1370.1" r="4.6" stroke="#ec0c0c" stroke-width="3.4" fill="none"/><circle cx="770.1" cy="1370.3" r="4.6" stroke="#ec0c0c" stroke-width="3.4" fill="none"/><circle cx="770.1" cy="1370.5" r="4.6" stroke="#ec0c0c" stroke-width="3.4" fill="none"/><circle cx="770.1" cy="1370.7" r="4.6" stroke="#ec0c0c" stroke-width="3.4" fill="none"/><circle cx="770.1" cy="1370.8" r="4.6" stroke="#ec0c0c" stroke-width="3.4" fill="none"/><circle cx="770.1" cy="1370.9" r="4.6" stroke="#ec0c0c" stroke-width="3.4" fill="none"/><circle cx="770.1" cy="1371.0" r="4.6" stroke="#ec0c0c" stroke-width="3.4" fill="none"/><circle cx="770.1" cy="1371.0" r="4.6" stroke="#ec0c0c" stroke-width="3.4" fill="none"/><circle cx="770.1" cy="1371.1" r="4.6" stroke="#ec0c0c" stroke-width="3.4" fill="none"/><circle cx="770.1" cy="1371.1" r="4.6" stroke="#ec0c0c" stroke-width="3.4" fill="none"/>
</svg>
<div style="position:absolute;left:156px;top:813.4px;width:290.4px;height:300.8px;box-sizing:border-box;background:#ececec;border-top:1px solid #d0d0d0;"></div>
<div style="position:absolute;left:158px;top:899.4px;width:286.4px;height:24px;box-sizing:border-box;background:#55acee;"></div>
<div style="position:absolute;left:189px;top:894px;width:255px;height:1.4px;box-sizing:border-box;background:#cdcdcd;"></div>
<div style="position:absolute;left:189px;top:976.6px;width:255px;height:1.4px;box-sizing:border-box;background:#cdcdcd;"></div>
<div style="position:absolute;left:189px;top:1083.8px;width:255px;height:1.4px;box-sizing:border-box;background:#cdcdcd;"></div>
<div style="position:absolute;top:822.00px;font-size:14.3px;line-height:1;white-space:nowrap;color:#000;left:193.00px;transform:scaleX(0.96);transform-origin:0 0;">Resistor</div>
<div style="position:absolute;top:847.00px;font-size:14.3px;line-height:1;white-space:nowrap;color:#000;left:193.00px;transform:scaleX(0.96);transform-origin:0 0;">Capacitor</div>
<div style="position:absolute;top:871.00px;font-size:14.3px;line-height:1;white-space:nowrap;color:#000;left:193.00px;transform:scaleX(0.96);transform-origin:0 0;">Inductor</div>
<div style="position:absolute;top:905.00px;font-size:14.3px;line-height:1;white-space:nowrap;color:#000;left:193.00px;transform:scaleX(0.96);transform-origin:0 0;">Warburg Impedance</div>
<div style="position:absolute;top:930.00px;font-size:14.3px;line-height:1;white-space:nowrap;color:#000;left:193.00px;transform:scaleX(0.96);transform-origin:0 0;">Nernst Diffusion</div>
<div style="position:absolute;top:954.00px;font-size:14.3px;line-height:1;white-space:nowrap;color:#000;left:193.00px;transform:scaleX(0.96);transform-origin:0 0;">Finite Diffusion</div>
<div style="position:absolute;top:988.00px;font-size:14.3px;line-height:1;white-space:nowrap;color:#000;left:193.00px;transform:scaleX(0.96);transform-origin:0 0;">Homogenous Reaction Impedance</div>
<div style="position:absolute;top:1012.00px;font-size:14.3px;line-height:1;white-space:nowrap;color:#000;left:193.00px;transform:scaleX(0.96);transform-origin:0 0;">Constant Phase Element (CPE)</div>
<div style="position:absolute;top:1036.00px;font-size:14.3px;line-height:1;white-space:nowrap;color:#000;left:193.00px;transform:scaleX(0.96);transform-origin:0 0;">Young-Göhr Impedance</div>
<div style="position:absolute;top:1060.00px;font-size:14.3px;line-height:1;white-space:nowrap;color:#000;left:193.00px;transform:scaleX(0.96);transform-origin:0 0;">Spherical Diffusion</div>
<div style="position:absolute;top:1094.00px;font-size:14.3px;line-height:1;white-space:nowrap;color:#000;left:193.00px;transform:scaleX(0.96);transform-origin:0 0;">Surface Relaxation Impedance</div>
<div style="position:absolute;left:232.3px;top:1240.2px;width:119.4px;height:66.8px;box-sizing:border-box;background:#e8e8e8;border-radius:13px;"></div>
<div style="position:absolute;left:241.3px;top:1251.2px;width:19.6px;height:22.4px;box-sizing:border-box;background:#bcdaf5;border:1.5px solid #4a8ad6;"></div>
<div style="position:absolute;top:1256.00px;font-size:13.5px;line-height:1;white-space:nowrap;color:#000;font-weight:bold;left:-48.80px;width:600px;text-align:center;">C</div>
<div style="position:absolute;left:266px;top:1252.6px;width:65px;height:17.8px;box-sizing:border-box;background:#fff;border:1px solid #6a6a6a;"></div>
<div style="position:absolute;top:1257.00px;font-size:11.8px;line-height:1;white-space:nowrap;color:#000;right:1273.50px;transform:scaleX(1.05);transform-origin:100% 0;">992n</div>
<div style="position:absolute;top:1256.00px;font-size:13.5px;line-height:1;white-space:nowrap;color:#000;font-weight:bold;left:335.00px;">F</div>
<div style="position:absolute;left:262.8px;top:1282.4px;width:25.6px;height:15.8px;box-sizing:border-box;background:#dedede;border:2px solid #1c4cc4;"></div>
<div style="position:absolute;left:296.2px;top:1282.6px;width:24.8px;height:15.4px;box-sizing:border-box;background:#d9d9d9;border:1px solid #a6a6a6;"></div>
<div style="position:absolute;left:317.7px;top:1413px;width:28.8px;height:26.2px;box-sizing:border-box;background:#f4726a;border-radius:4px;"></div>
<svg width="1600" height="1464" viewBox="0 0 1600 1464" style="position:absolute;left:0;top:0;overflow:visible">
<defs><linearGradient id="ag" x1="0" y1="0" x2="1" y2="0.3"><stop offset="0" stop-color="#f6d020"/><stop offset="0.55" stop-color="#e07818"/><stop offset="1" stop-color="#b02010"/></linearGradient></defs><rect x="2" y="37" width="12.6" height="13.2" rx="2" fill="#a01a0c"/><rect x="3.2" y="38.2" width="10.2" height="10.8" rx="1.2" fill="url(#ag)"/><circle cx="9.3" cy="42.2" r="2.6" fill="#e8a040" stroke="#1a0800" stroke-width="1.3"/><path d="M7.500 44.200 L4.200 47.6" stroke="#1a0800" stroke-width="1.8"/><path d="M6 49 Q10 46.500 13.400 46.800 V49 Z" fill="#c03010"/><path d="M1498.800 42.700 H1507.8" stroke="#222" stroke-width="1"/><path d="M1538 40 V38.300 H1545.300 V45 H1543.5" stroke="#222" stroke-width="1" fill="none"/><rect x="1536" y="40.2" width="7.3" height="6.6" fill="none" stroke="#222" stroke-width="1"/><path d="M1574.700 38.200 L1583.700 46.800 M1583.700 38.200 L1574.700 46.8" stroke="#222" stroke-width="1.1"/><rect x="3.5" y="75" width="1.2" height="1.2" fill="#9a9a9a"/><rect x="3.5" y="77.6" width="1.2" height="1.2" fill="#9a9a9a"/><rect x="3.5" y="80.19999999999999" width="1.2" height="1.2" fill="#9a9a9a"/><rect x="3.5" y="82.79999999999998" width="1.2" height="1.2" fill="#9a9a9a"/><rect x="3.5" y="85.39999999999998" width="1.2" height="1.2" fill="#9a9a9a"/><rect x="3.5" y="87.99999999999997" width="1.2" height="1.2" fill="#9a9a9a"/><rect x="3.5" y="90.59999999999997" width="1.2" height="1.2" fill="#9a9a9a"/><rect x="3.5" y="93.19999999999996" width="1.2" height="1.2" fill="#9a9a9a"/><g transform="translate(11.5,76.8) scale(1.0)"><defs><linearGradient id="fg115_768" x1="0" y1="0" x2="0.15" y2="1"><stop offset="0" stop-color="#fffdf0"/><stop offset="0.55" stop-color="#fdf9d6"/><stop offset="0.8" stop-color="#f4e660"/><stop offset="1" stop-color="#ead41c"/></linearGradient></defs><path d="M0.800 3.500 L4 1.800 L17.800 2.700 L17.800 11.800 L1.700 15.500 Z" fill="url(#fg115_768)" stroke="#ebe392" stroke-width="0.9"/><path d="M3.500 5.500 L16.500 5 " stroke="#f3efc4" stroke-width="0.8"/></g><g transform="translate(37.5,76.2) scale(0.93)"><path d="M0 0 H19 V16.500 L16.500 19 H0 Z" fill="#1c1cc6" stroke="#10107a" stroke-width="0.9"/><rect x="2.8" y="0.5" width="13.4" height="10.3" fill="#3c3c3c"/><path d="M2.800 2.100 H16.200 M2.800 4.200 H16.200 M2.800 6.300 H16.200 M2.800 8.400 H16.200 M2.800 10.300 H16.2" stroke="#e2e2e2" stroke-width="0.95"/><rect x="8.2" y="12.2" width="8" height="6.8" fill="#f0f0ff"/><rect x="3.2" y="12.2" width="2.2" height="6.8" fill="#6a6ae8"/></g><g transform="translate(63.5,76.2) scale(0.93)"><path d="M0 0 H19 V16.500 L16.500 19 H0 Z" fill="#1c1cc6" stroke="#10107a" stroke-width="0.9"/><rect x="2.8" y="0.5" width="13.4" height="10.3" fill="#3c3c3c"/><path d="M2.800 2.100 H16.200 M2.800 4.200 H16.200 M2.800 6.300 H16.200 M2.800 8.400 H16.200 M2.800 10.300 H16.2" stroke="#e2e2e2" stroke-width="0.95"/><rect x="8.2" y="12.2" width="8" height="6.8" fill="#f0f0ff"/><rect x="3.2" y="12.2" width="2.2" height="6.8" fill="#6a6ae8"/></g><path d="M72 88.500 L79 77" stroke="#e08828" stroke-width="3.2"/><path d="M72 88.500 L71 92 L74 90 Z" fill="#333"/><path d="M79 77 L80.500 74.8" stroke="#222" stroke-width="3.2"/><g transform="translate(88.5,75.5) scale(0.93)"><path d="M0 4 H15 L17 6 V20 H0 Z" fill="#e03434" stroke="#a81818" stroke-width="1"/><rect x="2.5" y="5" width="11.5" height="6.5" fill="#f4f4f4"/><rect x="4.5" y="14" width="8.5" height="6" fill="#f0e0e0"/><rect x="6" y="15" width="2.6" height="4" fill="#c02020"/><path d="M2 6 L8 1 L10 3 L4 9 Z" fill="#3a78d8" stroke="#204890" stroke-width="0.6"/><path d="M5 5 L9 1.5" stroke="#e09030" stroke-width="1.6"/><path d="M8 4.5 Q12 1 15 2.8 V0 L21 4.5 L15 9 V6.2 Q12 5 9.5 7.5 Z" fill="#4fc24a" stroke="#2a8a2a" stroke-width="0.8"/></g><g transform="translate(114.5,75.5) scale(0.93)"><path d="M0 4 H15 L17 6 V20 H0 Z" fill="#e03434" stroke="#a81818" stroke-width="1"/><rect x="2.5" y="5" width="11.5" height="6.5" fill="#f4f4f4"/><rect x="4.5" y="14" width="8.5" height="6" fill="#f0e0e0"/><rect x="6" y="15" width="2.6" height="4" fill="#c02020"/><path d="M2.5 10 Q5 2 7 7 T12 5" stroke="#e02020" stroke-width="1.4" fill="none"/><path d="M8 4.5 Q12 1 15 2.8 V0 L21 4.5 L15 9 V6.2 Q12 5 9.5 7.5 Z" fill="#4fc24a" stroke="#2a8a2a" stroke-width="0.8"/></g><rect x="139" y="75" width="1" height="19" fill="#c8c8c8"/><g transform="translate(146,76.5) scale(0.92)"><path d="M2.5 2.5 L15.5 15.5" stroke="#3a3a3a" stroke-width="2.4" stroke-linecap="round"/><path d="M9.5 9.5 L16.5 16.5" stroke="#f0a020" stroke-width="4" stroke-linecap="round"/><path d="M3.5 16 L14 5" stroke="#555" stroke-width="2.6" stroke-linecap="round"/><path d="M12 3.5 L14.5 1 M16 5.5 L18.5 3.5" stroke="#555" stroke-width="2.2" stroke-linecap="round"/><circle cx="3.3" cy="16.2" r="1" fill="#ececec"/></g><rect x="198.5" y="75" width="1.2" height="1.2" fill="#9a9a9a"/><rect x="198.5" y="77.6" width="1.2" height="1.2" fill="#9a9a9a"/><rect x="198.5" y="80.19999999999999" width="1.2" height="1.2" fill="#9a9a9a"/><rect x="198.5" y="82.79999999999998" width="1.2" height="1.2" fill="#9a9a9a"/><rect x="198.5" y="85.39999999999998" width="1.2" height="1.2" fill="#9a9a9a"/><rect x="198.5" y="87.99999999999997" width="1.2" height="1.2" fill="#9a9a9a"/><rect x="198.5" y="90.59999999999997" width="1.2" height="1.2" fill="#9a9a9a"/><rect x="198.5" y="93.19999999999996" width="1.2" height="1.2" fill="#9a9a9a"/><g transform="translate(205,76)"><rect x="1" y="0.5" width="19" height="17" fill="#fbfbfb" opacity="0.9"/><path d="M1 6 H20 M1 12 H20 M7.5 0.5 V17.5 M14 0.5 V17.5" stroke="#d4d4d4" stroke-width="1"/><ellipse cx="14.2" cy="14.6" rx="4.3" ry="2.5" transform="rotate(22 14.2 14.6)" fill="#8a8ae6" stroke="#4a4ab8" stroke-width="0.8"/><path d="M1 16 C5.500 16 6 5.500 9 5.500 S 11 11 14 11 S 17.500 8 20.500 7.5" stroke="#e02020" stroke-width="1.6" fill="none"/><path d="M8.8 -0.5 V18.5" stroke="#000" stroke-width="1.5"/><path d="M10.5 7 L15.500 2 L17.500 4 L12.500 9 Z" fill="#40c040" stroke="#207820" stroke-width="0.6"/></g><rect x="229.3" y="72.4" width="25.6" height="24" fill="#cfe4f9" stroke="#9cc8f2" stroke-width="1.3"/><g transform="translate(231.5,76)"><rect x="1" y="0.5" width="19" height="17" fill="#fbfbfb" opacity="0.9"/><path d="M1 6 H20 M1 12 H20 M7.5 0.5 V17.5 M14 0.5 V17.5" stroke="#d4d4d4" stroke-width="1"/><ellipse cx="14.2" cy="14.6" rx="4.3" ry="2.5" transform="rotate(22 14.2 14.6)" fill="#8a8ae6" stroke="#4a4ab8" stroke-width="0.8"/><path d="M1 16 C5.500 16 6 5.500 9 5.500 S 11 11 14 11 S 17.500 8 20.500 7.5" stroke="#e02020" stroke-width="1.6" fill="none"/><path d="M5 9.500 L9 4.500 L7 8 L11.500 2.5" stroke="#3868e0" stroke-width="2.2" fill="none"/><circle cx="10.5" cy="3.5" r="1.6" fill="#3868e0"/><circle cx="5" cy="9" r="1.6" fill="#3868e0"/></g><g transform="translate(257.5,76)"><rect x="1" y="0.5" width="19" height="17" fill="#fbfbfb" opacity="0.9"/><path d="M1 6 H20 M1 12 H20 M7.5 0.5 V17.5 M14 0.5 V17.5" stroke="#d4d4d4" stroke-width="1"/><ellipse cx="14.2" cy="14.6" rx="4.3" ry="2.5" transform="rotate(22 14.2 14.6)" fill="#8a8ae6" stroke="#4a4ab8" stroke-width="0.8"/><path d="M1 16 C5.500 16 6 5.500 9 5.500 S 11 11 14 11 S 17.500 8 20.500 7.5" stroke="#e02020" stroke-width="1.6" fill="none"/><rect x="4.5" y="1.5" width="9.5" height="8.5" fill="none" stroke="#000" stroke-width="1.4" stroke-dasharray="1.4 1.2"/></g><g transform="translate(283.5,76)"><rect x="1" y="0.5" width="19" height="17" fill="#fbfbfb" opacity="0.9"/><path d="M1 6 H20 M1 12 H20 M7.5 0.5 V17.5 M14 0.5 V17.5" stroke="#d4d4d4" stroke-width="1"/><ellipse cx="14.2" cy="14.6" rx="4.3" ry="2.5" transform="rotate(22 14.2 14.6)" fill="#8a8ae6" stroke="#4a4ab8" stroke-width="0.8"/><path d="M1 16 C5.500 16 6 5.500 9 5.500 S 11 11 14 11 S 17.500 8 20.500 7.5" stroke="#e02020" stroke-width="1.6" fill="none"/><path d="M10 -0.5 V18.5 M2.500 4.500 H19" stroke="#000" stroke-width="1.5"/><rect x="8.6" y="3" width="2.8" height="2.8" fill="#000"/></g><rect x="308" y="75" width="1" height="19" fill="#c8c8c8"/><g transform="translate(313,76)"><rect x="1" y="0.5" width="19" height="17" fill="#fbfbfb" opacity="0.9"/><path d="M1 6 H20 M1 12 H20 M7.5 0.5 V17.5 M14 0.5 V17.5" stroke="#d4d4d4" stroke-width="1"/><path d="M1 16 C5.500 16 6 5.500 9 5.500 S 11 11 14 11 S 17.500 8 20.500 7.5" stroke="#e02020" stroke-width="1.6" fill="none"/><path d="M4.500 6 Q7 1 13 2 L12.500 0 L18 3.500 L12.500 6.500 L12.800 4.500 Q9 4 7.500 7 Z" fill="#4fc24a" stroke="#2a8a2a" stroke-width="0.7"/><path d="M17.500 12.500 Q15 17.500 9 16.500 L9.500 18.500 L4 15 L9.500 12 L9.200 14 Q13 14.500 14.500 11.500 Z" fill="#4fc24a" stroke="#2a8a2a" stroke-width="0.7"/></g><rect x="338.3" y="72.4" width="25.6" height="24" fill="#cfe4f9" stroke="#9cc8f2" stroke-width="1.3"/><g transform="translate(340.5,76)"><rect x="0.5" y="-0.5" width="20.5" height="20" fill="#fdfdfd"/><path d="M0.500 6 H21 M0.500 13 H21 M10 -0.500 V19.500 M16 -0.500 V19.5" stroke="#dde4ee" stroke-width="1"/><path d="M1 0 L20.500 19.5" stroke="#000" stroke-width="1.4"/></g><g transform="translate(380.3,84.3) rotate(-42)"><path d="M-4.600 -6.500 V1 A4.600 4.600 0 0 0 4.600 1 V-6.5" stroke="#161616" stroke-width="3.6" fill="none"/><path d="M-4.600 -7 V-3.5" stroke="#2838d8" stroke-width="3.8"/><path d="M4.600 -7 V-3.5" stroke="#e02020" stroke-width="3.8"/></g><rect x="515.5" y="75" width="1.2" height="1.2" fill="#9a9a9a"/><rect x="515.5" y="77.6" width="1.2" height="1.2" fill="#9a9a9a"/><rect x="515.5" y="80.19999999999999" width="1.2" height="1.2" fill="#9a9a9a"/><rect x="515.5" y="82.79999999999998" width="1.2" height="1.2" fill="#9a9a9a"/><rect x="515.5" y="85.39999999999998" width="1.2" height="1.2" fill="#9a9a9a"/><rect x="515.5" y="87.99999999999997" width="1.2" height="1.2" fill="#9a9a9a"/><rect x="515.5" y="90.59999999999997" width="1.2" height="1.2" fill="#9a9a9a"/><rect x="515.5" y="93.19999999999996" width="1.2" height="1.2" fill="#9a9a9a"/><g fill="none"><path d="M527.500 75.500 V94 M537.500 75.500 V86" stroke="#555" stroke-width="1.1" stroke-dasharray="1.600 1.6"/><path d="M523 92.500 C526 92.500 526.500 91 528 86 S 531 79 532.500 81.500 S 534.500 88 536.500 87.500 S 540 85 542.500 84.5" stroke="#2030e0" stroke-width="1.7"/><path d="M533.500 92 a2.200 1.600 0 1 0 4.200 0 a2.200 1.600 0 1 0 4.200 0" stroke="#c01818" stroke-width="1.3" fill="#e85050"/><path d="M537.700 88 V93" stroke="#c01818" stroke-width="1"/></g><g fill="none"><path d="M555.500 83.300 H563.500 L556 92 H564.5" stroke="#b01010" stroke-width="2.5"/><path d="M553.500 77.800 H561 M554 80.300 H557.5" stroke="#2a2ae0" stroke-width="1.3"/><path d="M561 77.800 C566 77.800 565.500 91 568.500 91 S 571.500 86 573.500 86.5" stroke="#2a2ae0" stroke-width="1.6"/></g><g font-weight="bold"><text x="580" y="81" font-size="6.5" font-family="'Liberation Serif',serif" fill="#000">z'(f)</text><text x="580.5" y="88" font-size="6.5" font-family="'Liberation Sans',sans-serif" fill="#c01818">KK</text><text x="586.5" y="94.5" font-size="6.5" font-family="'Liberation Serif',serif" fill="#000">z"(f)</text><path d="M591.500 79.500 Q597 82 595.500 86.500 M597 84 L595.500 87 L593.500 85" stroke="#000" stroke-width="0.9" fill="none"/></g><g fill="none"><path d="M605.500 93 L617.500 77 Q619 75 620 77.500 C621.500 82 623 88 624.500 92" stroke="#3a30e0" stroke-width="1.6"/><path d="M608 89.500 h1.500 M612 84.500 h1.500 M616 79 h1.500 M619 75.500 h1.500 M622.500 81 h1.500 M624 86 h1.5" stroke="#e03030" stroke-width="1.3"/></g><rect x="628" y="72.2" width="26" height="24.3" fill="#9ccdf4"/><g><path d="M633 77.500 V81 M638 77.500 V81 M643.500 77.500 V81" stroke="#111" stroke-width="1.4"/><path d="M632 81.500 H646.5" stroke="#d02020" stroke-width="1.3"/><path d="M646.500 81.500 L649.500 78.500 M647.500 85 L651 83 M648 88 L651.500 87.500 M647.500 90.500 L651 92" stroke="#111" stroke-width="1.4"/><path d="M647 83 L648.500 90" stroke="#d02020" stroke-width="1.1"/><text x="632.3" y="90.6" font-size="9.6" font-family="'Liberation Sans',sans-serif" fill="#22404e" font-weight="bold" textLength="14" lengthAdjust="spacingAndGlyphs">FIT</text><path d="M632 93.700 H636 M643 93.700 H646 M648.500 93.700 H652" stroke="#000" stroke-width="1.5"/><rect x="636" y="92.2" width="7" height="3" fill="#fff" stroke="#000" stroke-width="1.1"/><path d="M646.300 91.500 V96 M648.300 91.500 V96" stroke="#000" stroke-width="1.2"/></g><g fill="none" stroke-width="1.1"><path d="M662 86 Q668 82 672.500 76 Q675 81 681 83.500 Q674 87 670.500 93.500 Q666 92 662 86 Z" stroke="#e04020"/><path d="M663.500 86.500 Q669 83 673 78 Q675.500 82 680 84.500 Q674 87.500 671 92 Q667 91 663.500 86.500 Z" stroke="#20a040"/><path d="M665 87 Q670 84 673.500 80 Q676 83.500 679 85.500 Q674.500 88 672 91 Q668 90 665 87 Z" stroke="#2a2ae0"/><path d="M674.500 94.500 L678 91 L681.500 94.5" stroke="#b01818" stroke-width="2.2"/></g><g fill="none"><path d="M688.700 88.200 Q696.600 84.900 699.400 76.800 Q702.200 81.500 706.700 82.600 Q700 84.900 697.700 92 Q694.400 89.400 688.700 88.200 Z" stroke="#4a3ae0" stroke-width="1.1"/><path d="M690 87.700 L706 82.3" stroke="#e02020" stroke-width="1.1" stroke-dasharray="2.500 1.5"/></g><g fill="none"><path d="M714.300 88.200 Q722 84 724.700 76 Q727.500 80.500 732 82 Q725.500 86 722 94 Q719.500 90 714.300 88.200 Z" stroke="#4a3ae0" stroke-width="1.1"/><path d="M724.700 75.500 V79.500 M722 89.500 V94.5" stroke="#222" stroke-width="1.3"/></g><g><path d="M749 78 Q752 81 758 82 Q753 83.500 750.500 85.500 Q748 83 747.500 80 Z" fill="#20d8f4"/><path d="M740 88.200 Q747.500 84.900 750 77 Q753 81.500 758 82.300 Q751 84.900 748.700 92 Q745.500 89.400 740 88.200 Z" stroke="#4a3ae0" stroke-width="1.1" fill="none"/><path d="M741 87.700 L752 84" stroke="#e02020" stroke-width="1.1"/><path d="M744 76.500 V82.5" stroke="#333" stroke-width="1"/></g><g fill="none"><path d="M771.400 75 V95 M777 75 V95" stroke="#e88070" stroke-width="1.5"/><path d="M782.700 75 V95 M787.700 75 V95" stroke="#7878ea" stroke-width="1.5"/><path d="M770.300 75.300 L780.400 92 L789.400 75.3" stroke="#111" stroke-width="2.1"/><path d="M780.400 88 V94.5" stroke="#103018" stroke-width="2"/></g><g fill="none"><path d="M796.200 75.300 L805.700 86.600 L815.300 75.300 M805.700 86.600 V94.4" stroke="#111" stroke-width="1.9"/><path d="M796.200 75.300 L805.700 86.600 L815.300 75.300 M805.700 86.600 V94.4" stroke="#e0a020" stroke-width="0.9" stroke-dasharray="2 2.5"/></g><rect x="547.5" y="75" width="1" height="19" fill="#c8c8c8"/><rect x="657" y="75" width="1" height="19" fill="#c8c8c8"/><rect x="764" y="75" width="1" height="19" fill="#c8c8c8"/><rect x="1563" y="75" width="1.2" height="1.2" fill="#9a9a9a"/><rect x="1563" y="77.6" width="1.2" height="1.2" fill="#9a9a9a"/><rect x="1563" y="80.19999999999999" width="1.2" height="1.2" fill="#9a9a9a"/><rect x="1563" y="82.79999999999998" width="1.2" height="1.2" fill="#9a9a9a"/><rect x="1563" y="85.39999999999998" width="1.2" height="1.2" fill="#9a9a9a"/><rect x="1563" y="87.99999999999997" width="1.2" height="1.2" fill="#9a9a9a"/><rect x="1563" y="90.59999999999997" width="1.2" height="1.2" fill="#9a9a9a"/><rect x="1563" y="93.19999999999996" width="1.2" height="1.2" fill="#9a9a9a"/><g transform="translate(1572,75.5)"><defs><linearGradient id="lg" x1="0" y1="0" x2="0" y2="1"><stop offset="0" stop-color="#f0a818"/><stop offset="0.45" stop-color="#f8bc18"/><stop offset="1" stop-color="#ffd820"/></linearGradient></defs><path d="M4 8 V5.500 A4 4.200 0 0 1 12 5.500 V8" stroke="#8e8e8e" stroke-width="2" fill="none"/><path d="M5.300 8 V5.800 A2.700 2.900 0 0 1 10.700 5.800 V8" stroke="#dcdcdc" stroke-width="0.9" fill="none"/><rect x="0.8" y="7" width="14.4" height="10.6" rx="1.3" fill="url(#lg)" stroke="#c88c08" stroke-width="1"/><rect x="7" y="9.3" width="2" height="4.6" rx="0.8" fill="#3a2200"/></g><rect x="387.8" y="103.2" width="7.0" height="6.1" fill="none" stroke="#000" stroke-width="1.3"/><rect x="404.2" y="102.3" width="4.2" height="3.8" fill="none" stroke="#000" stroke-width="1.2"/><rect x="402.3" y="104.6" width="4.2" height="4.2" fill="#dcdcdc" stroke="#000" stroke-width="1.2"/><path d="M417.1 102.9 l6.0 6.2 M423.1 102.9 l-6.0 6.2" stroke="#000" stroke-width="1.4" fill="none"/><rect x="1558.6" y="103.2" width="7.0" height="6.1" fill="none" stroke="#000" stroke-width="1.3"/><rect x="1575.0" y="102.3" width="4.2" height="3.8" fill="none" stroke="#000" stroke-width="1.2"/><rect x="1573.1" y="104.6" width="4.2" height="4.2" fill="#dcdcdc" stroke="#000" stroke-width="1.2"/><path d="M1587.9 102.9 l6.0 6.2 M1593.9 102.9 l-6.0 6.2" stroke="#000" stroke-width="1.4" fill="none"/><rect x="586.5" y="771.7" width="8.1" height="7.0" fill="none" stroke="#000" stroke-width="1.3"/><rect x="605.9" y="770.6" width="4.9" height="4.3" fill="none" stroke="#000" stroke-width="1.2"/><rect x="603.8" y="773.3" width="4.9" height="4.9" fill="#dcdcdc" stroke="#000" stroke-width="1.2"/><path d="M620.8 771.4 l6.9 7.1 M627.8 771.4 l-6.9 7.1" stroke="#000" stroke-width="1.4" fill="none"/><path d="M416.5 146.7 L419.5 143.3 L422.5 146.7" stroke="#111" stroke-width="1.7" fill="none"/><path d="M416.5 735.1 L419.5 738.4 L422.5 735.1" stroke="#111" stroke-width="1.7" fill="none"/><path d="M11.7 747.9 L8.3 750.9 L11.7 753.9" stroke="#111" stroke-width="1.7" fill="none"/><path d="M402.9 747.9 L406.1 750.9 L402.9 753.9" stroke="#111" stroke-width="1.7" fill="none"/><path d="M619.6 816.9 L623.0 813.1 L626.4 816.9" stroke="#111" stroke-width="1.8" fill="none"/><path d="M619.6 1440.5 L623.0 1444.3 L626.4 1440.5" stroke="#111" stroke-width="1.8" fill="none"/><path d="M10.2 1453.9 L6.4 1457.3 L10.2 1460.7" stroke="#111" stroke-width="1.8" fill="none"/><path d="M604.5 1453.9 L608.3 1457.3 L604.5 1460.7" stroke="#111" stroke-width="1.8" fill="none"/><path d="M1397.6 529.4 L1394.4 532.3 L1397.6 535.2" stroke="#111" stroke-width="1.7" fill="none"/><path d="M1573.4 529.4 L1576.6 532.3 L1573.4 535.2" stroke="#111" stroke-width="1.7" fill="none"/><path d="M1579.500 150 h6.400 l-3.200 3.600 Z M1579.500 172.600 h6.400 l-3.200 3.600 Z" fill="#111"/><path d="M1580.800 251.300 h5 l-2.500 -3 Z M1580.800 255 h5 l-2.500 3 Z" fill="#111"/><circle cx="1472.5" cy="196.3" r="4.9" fill="#fff" stroke="#333" stroke-width="1.1"/><circle cx="1472.5" cy="196.3" r="2.7" fill="#000"/><circle cx="1472.5" cy="212.2" r="4.9" fill="#fff" stroke="#333" stroke-width="1.1"/><circle cx="1472.5" cy="228.1" r="4.9" fill="#fff" stroke="#333" stroke-width="1.1"/><g transform="translate(10.2,119.3) scale(0.56)"><defs><linearGradient id="fg102_1193" x1="0" y1="0" x2="0.15" y2="1"><stop offset="0" stop-color="#fffdf0"/><stop offset="0.55" stop-color="#fdf9d6"/><stop offset="0.8" stop-color="#f4e660"/><stop offset="1" stop-color="#ead41c"/></linearGradient></defs><path d="M0.800 3.500 L4 1.800 L17.800 2.700 L17.800 11.800 L1.700 15.500 Z" fill="url(#fg102_1193)" stroke="#ebe392" stroke-width="0.9"/><path d="M3.500 5.500 L16.500 5 " stroke="#f3efc4" stroke-width="0.8"/></g><g transform="translate(72,118.3) scale(0.6)"><path d="M0 0 H19 V16.500 L16.500 19 H0 Z" fill="#1c1cc6" stroke="#10107a" stroke-width="0.9"/><rect x="2.8" y="0.5" width="13.4" height="10.3" fill="#3c3c3c"/><path d="M2.800 2.100 H16.200 M2.800 4.200 H16.200 M2.800 6.300 H16.200 M2.800 8.400 H16.200 M2.800 10.300 H16.2" stroke="#e2e2e2" stroke-width="0.95"/><rect x="8.2" y="12.2" width="8" height="6.8" fill="#f0f0ff"/><rect x="3.2" y="12.2" width="2.2" height="6.8" fill="#6a6ae8"/></g><circle cx="133.2" cy="124.4" r="4.7" fill="#5cf04a" opacity="0.55"/><circle cx="133.2" cy="124.4" r="3.7" fill="#2cf01c"/><path d="M214.600 119.300 L219 123.6" stroke="#666" stroke-width="1.4"/><path d="M218.600 123.200 L224.200 128.8" stroke="#c82020" stroke-width="2.8" stroke-linecap="round"/><path d="M278.800 116.600 L282.200 116.600 L280.400 121.600 L282.400 121.600 L277 130.800 L278.400 124.200 L276 124.200 Z" fill="#ffe020" stroke="#e05818" stroke-width="0.9"/><g transform="translate(9.3,789.3) scale(0.66)"><defs><linearGradient id="fg93_7893" x1="0" y1="0" x2="0.15" y2="1"><stop offset="0" stop-color="#fffdf0"/><stop offset="0.55" stop-color="#fdf9d6"/><stop offset="0.8" stop-color="#f4e660"/><stop offset="1" stop-color="#ead41c"/></linearGradient></defs><path d="M0.800 3.500 L4 1.800 L17.800 2.700 L17.800 11.800 L1.700 15.500 Z" fill="url(#fg93_7893)" stroke="#ebe392" stroke-width="0.9"/><path d="M3.500 5.500 L16.500 5 " stroke="#f3efc4" stroke-width="0.8"/></g><g transform="translate(82.3,788.2) scale(0.61)"><path d="M0 0 H19 V16.500 L16.500 19 H0 Z" fill="#1c1cc6" stroke="#10107a" stroke-width="0.9"/><rect x="2.8" y="0.5" width="13.4" height="10.3" fill="#3c3c3c"/><path d="M2.800 2.100 H16.200 M2.800 4.200 H16.200 M2.800 6.300 H16.200 M2.800 8.400 H16.200 M2.800 10.300 H16.2" stroke="#e2e2e2" stroke-width="0.95"/><rect x="8.2" y="12.2" width="8" height="6.8" fill="#f0f0ff"/><rect x="3.2" y="12.2" width="2.2" height="6.8" fill="#6a6ae8"/></g><circle cx="207.5" cy="794.5" r="5.2" fill="#5cf04a" opacity="0.55"/><circle cx="207.5" cy="794.5" r="4.1" fill="#2cf01c"/><path d="M303 788.800 L308 793.3" stroke="#666" stroke-width="1.5"/><path d="M307.600 793 L314.300 799" stroke="#c82020" stroke-width="3" stroke-linecap="round"/><path d="M459.300 786.200 L463.300 786.200 L461 792 L463.600 792 L456.700 801.500 L458.600 794.500 L455.600 794.500 Z" fill="#ffe020" stroke="#e05818" stroke-width="0.9"/>
<path d="M161.5 829.3 h3 M176.5 829.3 h3" stroke="#555" stroke-width="1.2"/><rect x="165.5" y="827.0999999999999" width="10" height="4.4" fill="#fff" stroke="#666" stroke-width="1"/><path d="M161.5 853.6 h7 M172.5 853.6 h7 M168.5 849.6 v8 M172.5 849.6 v8" stroke="#444" stroke-width="1.2"/><path d="M161.5 877.9 h3 M176.5 877.9 h3" stroke="#555" stroke-width="1.2"/><path d="M164.5 877.9 h12" stroke="#777" stroke-width="2.6"/><path d="M161.5 911.8 h3 M176.5 911.8 h3" stroke="#555" stroke-width="1.2"/><circle cx="170.5" cy="911.8" r="4" fill="#8fc4f0" stroke="#444" stroke-width="1.1"/><circle cx="170.5" cy="911.8" r="1.5" fill="#333"/><path d="M161.5 936.6 h3 M176.5 936.6 h3" stroke="#555" stroke-width="1.2"/><circle cx="170.5" cy="936.6" r="4" fill="#f4f4f4" stroke="#444" stroke-width="1.1"/><circle cx="170.5" cy="936.6" r="1.5" fill="#555"/><path d="M161.5 960.5 h3 M176.5 960.5 h3" stroke="#555" stroke-width="1.2"/><circle cx="170.5" cy="960.5" r="4" fill="#555" stroke="#444" stroke-width="1.1"/><circle cx="170.5" cy="960.5" r="1.5" fill="#111"/><path d="M161.5 994.7 h3 M176.5 994.7 h3" stroke="#555" stroke-width="1.2"/><circle cx="170.5" cy="994.7" r="4" fill="#f4f4f4" stroke="#444" stroke-width="1.1"/><circle cx="170.5" cy="994.7" r="1.5" fill="#444"/><path d="M161.5 1019 h3 M176.5 1019 h3" stroke="#555" stroke-width="1.2"/><rect x="168.0" y="1015" width="5" height="8" fill="#444"/><path d="M165.5 1019 h10" stroke="#444" stroke-width="1.2"/><path d="M161.5 1043 h3 M176.5 1043 h3" stroke="#555" stroke-width="1.2"/><rect x="168.0" y="1039" width="5" height="8" fill="#444"/><path d="M165.5 1043 h10" stroke="#444" stroke-width="1.2"/><path d="M161.5 1067.4 h3 M176.5 1067.4 h3" stroke="#555" stroke-width="1.2"/><circle cx="170.5" cy="1067.4" r="3.6" fill="#ddd" stroke="#222" stroke-width="2.2"/><rect x="165.0" y="1095.9" width="10.5" height="10.5" fill="none" stroke="#222" stroke-width="1"/><path d="M269 1290.500 L273.500 1295 L283 1285.5" stroke="#20a020" stroke-width="2.4" fill="none"/><path d="M303.500 1286 L313.500 1295.500 M313.500 1286 L303.500 1295.5" stroke="#e01818" stroke-width="2"/><circle cx="330.5" cy="1424.5" r="5.6" fill="none" stroke="#fff" stroke-width="1.8"/><path d="M334.500 1428.500 L339.500 1433.5" stroke="#fff" stroke-width="2.4" stroke-linecap="round"/><path d="M165.500 813.300 h14.5" stroke="#3ce030" stroke-width="1.6"/><path d="M284.600 813.300 h5.5" stroke="#d03020" stroke-width="1.4"/><path d="M184.500 813.300 h79 M299 813.300 h32" stroke="#555" stroke-width="1.3" stroke-dasharray="3 1.500 2 1 4 1.5"/>
</svg>
</body></html>
